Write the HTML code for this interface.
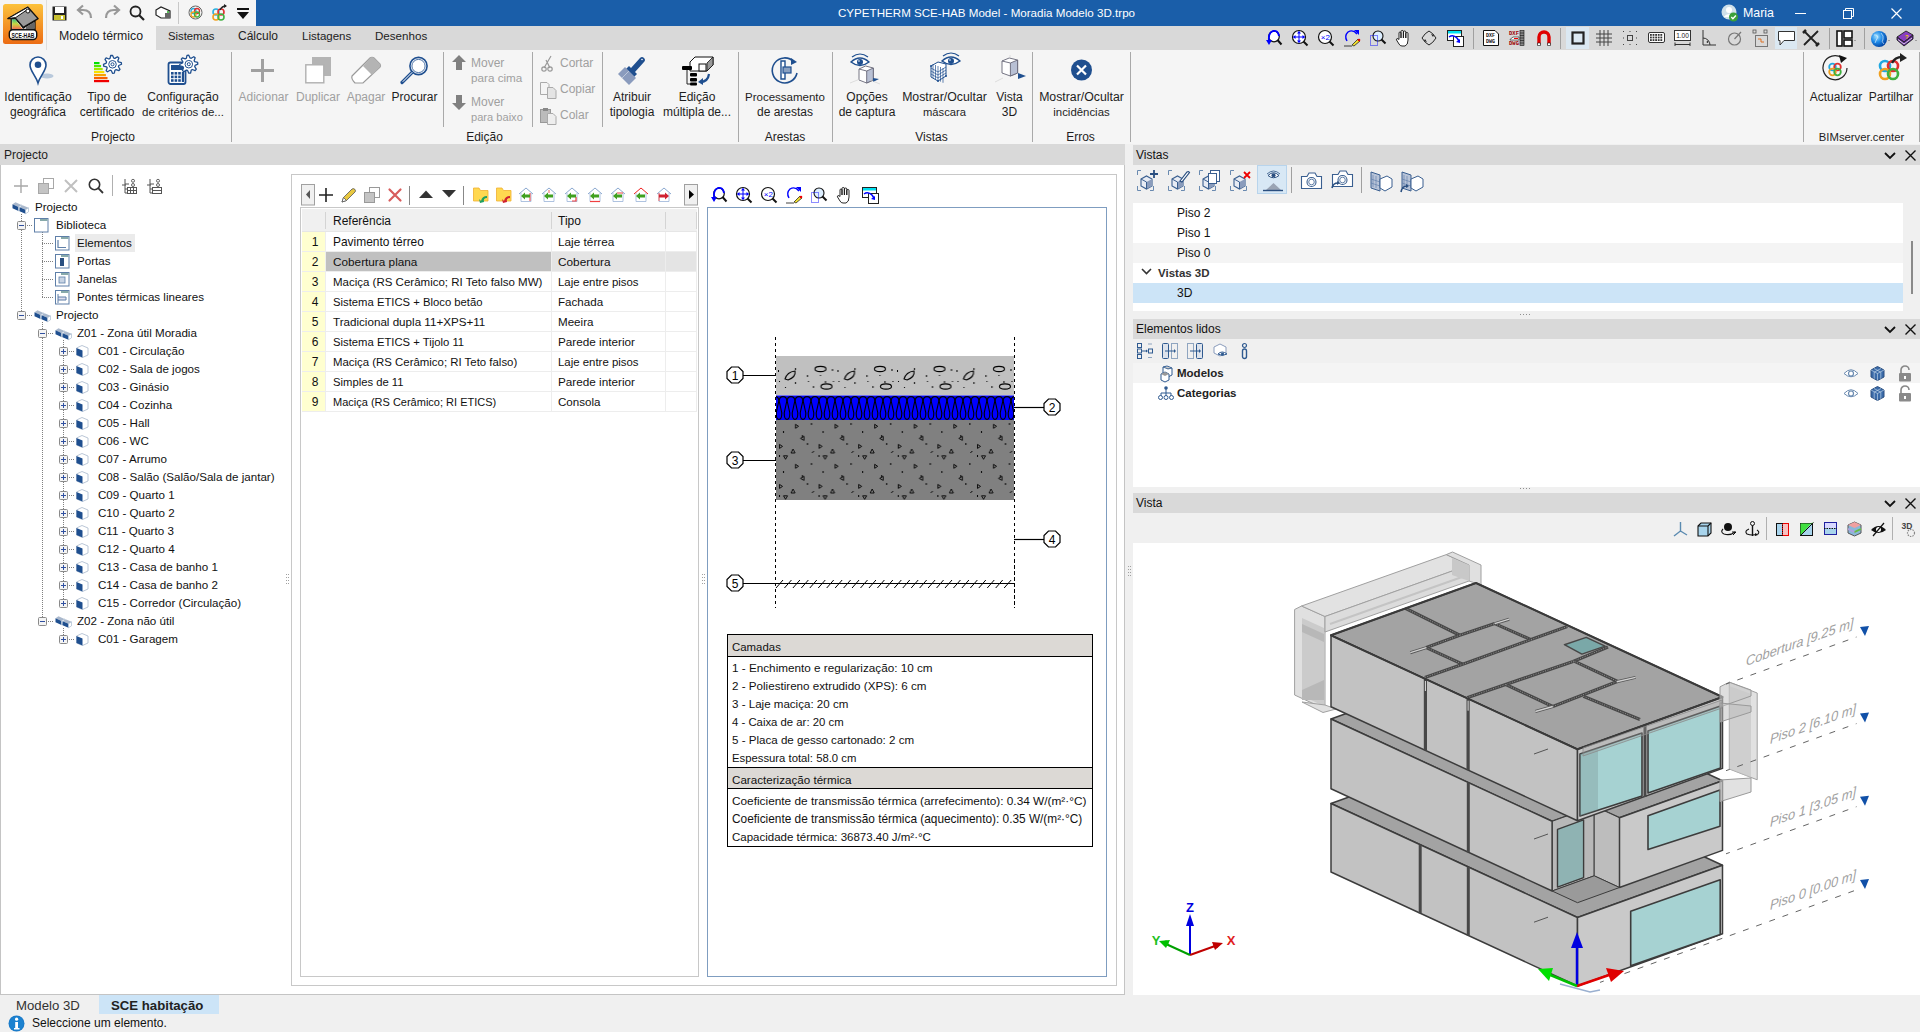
<!DOCTYPE html>
<html><head><meta charset="utf-8">
<style>
*{box-sizing:border-box}
html,body{margin:0;padding:0;width:1920px;height:1032px;overflow:hidden;background:#f0f0f0;font-family:"Liberation Sans",sans-serif;font-size:12px;color:#000}
.a{position:absolute}
.t{position:absolute;white-space:nowrap;line-height:14px}
svg{position:absolute;overflow:visible}
</style></head><body>

<div class="a" style="left:0px;top:0px;width:256px;height:26px;background:#f5f5f5;"></div>
<div class="a" style="left:256px;top:0px;width:1664px;height:26px;background:#1a5ea9;"></div>
<div class="t" style="left:838px;top:6px;font-size:11.6px;color:#fff;">CYPETHERM SCE-HAB Model - Moradia Modelo 3D.trpo</div>
<svg style="left:1721px;top:4px;" width="18" height="18" viewBox="0 0 18 18"><circle cx="8" cy="8" r="7.5" fill="#cfe0ea"/><circle cx="8" cy="6" r="3" fill="#fff"/><path d="M2.5 13 Q8 7 13.5 13" fill="#fff"/><circle cx="12.5" cy="13" r="4.5" fill="#3aa03a"/><path d="M10.3 13 l1.6 1.7 l3-3.2" stroke="#fff" stroke-width="1.4" fill="none"/></svg>
<div class="t" style="left:1743px;top:6px;font-size:12.4px;color:#fff;">Maria</div>
<div class="a" style="left:1795px;top:13px;width:11px;height:1px;background:#fff;"></div>
<svg style="left:1843px;top:8px;" width="11" height="11" viewBox="0 0 11 11"><rect x="0.5" y="2.5" width="8" height="8" fill="none" stroke="#fff"/><path d="M2.5 2.5 V0.5 H10.5 V8.5 H8.5" fill="none" stroke="#fff"/></svg>
<svg style="left:1891px;top:8px;" width="11" height="11" viewBox="0 0 11 11"><path d="M0.5 0.5 L10.5 10.5 M10.5 0.5 L0.5 10.5" stroke="#fff" stroke-width="1.2"/></svg>
<div class="a" style="left:0px;top:26px;width:156px;height:24px;background:#f5f5f5;"></div>
<div class="a" style="left:156px;top:26px;width:1764px;height:24px;background:#d9d9d9;"></div>
<div class="a" style="left:46px;top:0px;width:1px;height:50px;background:#dedede;"></div>
<div class="t" style="left:59px;top:29px;font-size:12.3px;color:#222;">Modelo térmico</div>
<div class="t" style="left:168px;top:29px;font-size:11.3px;color:#222;">Sistemas</div>
<div class="t" style="left:238px;top:29px;color:#222;">Cálculo</div>
<div class="t" style="left:302px;top:29px;font-size:11.5px;color:#222;">Listagens</div>
<div class="t" style="left:375px;top:29px;font-size:11.6px;color:#222;">Desenhos</div>
<svg style="left:3px;top:4px;" width="41" height="41" viewBox="0 0 41 41"><defs><linearGradient id="ag" x1="0" y1="0" x2="0" y2="1"><stop offset="0" stop-color="#fcc23c"/><stop offset="1" stop-color="#ec6c14"/></linearGradient>
<linearGradient id="eg" x1="0" y1="0" x2="0" y2="1"><stop offset="0" stop-color="#30c080"/><stop offset="0.5" stop-color="#c8d840"/><stop offset="1" stop-color="#f07050"/></linearGradient></defs>
<rect x="0" y="0" width="40" height="40" rx="2.5" fill="url(#ag)"/>
<path d="M8.2 13.7 V25.5 H32 V17 L20.3 24 L12.8 14.6Z" fill="#fff" stroke="#111" stroke-width="1.3"/>
<path d="M9.2 15 V25 H19.5 L12.5 15.5Z" fill="url(#eg)"/>
<path d="M23 23 L31 18 V25 H23Z" fill="#666"/>
<path d="M4.9 14.6 L24.9 3.2 L35.1 14.6 L20.3 23.4 L12.8 14.6Z" fill="#9a9a9a" stroke="#111" stroke-width="1.4" stroke-linejoin="round"/>
<path d="M4.9 14.6 L24.9 3.2 L26 4.5 L12.8 13.5Z" fill="#fff" stroke="#111" stroke-width="1"/>
<circle cx="24.9" cy="7" r="2" fill="#fff" stroke="#111" stroke-width="1"/>
<rect x="6.3" y="25.8" width="27.4" height="9.7" rx="3.5" fill="#fff" stroke="#111" stroke-width="1.4"/>
<text x="20" y="33.6" font-family="Liberation Sans" font-size="8" font-weight="bold" text-anchor="middle" fill="#111" textLength="23" lengthAdjust="spacingAndGlyphs">SCE-HAB</text></svg>
<svg style="left:52px;top:6px;" width="15" height="15" viewBox="0 0 15 15"><rect x="0.5" y="0.5" width="14" height="14" fill="#222"/><rect x="3" y="1" width="9" height="6" fill="#fff"/><rect x="2" y="9" width="11" height="5" fill="#c8c030"/><rect x="9" y="10" width="2" height="3" fill="#fff"/></svg>
<svg style="left:77px;top:5px;" width="17" height="15" viewBox="0 0 17 15"><path d="M14 13 Q14 5 6 5 H2" fill="none" stroke="#999" stroke-width="2.2"/><path d="M6 0.5 L1 5 L6 9.5" fill="none" stroke="#999" stroke-width="2.2"/></svg>
<svg style="left:103px;top:5px;" width="17" height="15" viewBox="0 0 17 15"><path d="M3 13 Q3 5 11 5 H15" fill="none" stroke="#999" stroke-width="2.2"/><path d="M11 0.5 L16 5 L11 9.5" fill="none" stroke="#999" stroke-width="2.2"/></svg>
<svg style="left:129px;top:5px;" width="16" height="16" viewBox="0 0 16 16"><circle cx="6.5" cy="6.5" r="5" fill="none" stroke="#222" stroke-width="1.8"/><path d="M10 10 L15 15" stroke="#222" stroke-width="2.2"/></svg>
<svg style="left:155px;top:6px;" width="17" height="14" viewBox="0 0 17 14"><path d="M1 4 L6 1 L15 5 L15 12 L6 12 L1 9 Z" fill="#fff" stroke="#222" stroke-width="1.2"/><rect x="10" y="7" width="5" height="5" fill="#666"/><circle cx="13" cy="6" r="1" fill="#2a2"/></svg>
<div class="a" style="left:178px;top:2px;width:1px;height:22px;background:#c8c8c8;"></div>
<svg style="left:188px;top:5px;" width="15" height="15" viewBox="0 0 15 15"><circle cx="7.5" cy="7.5" r="6.5" fill="none" stroke="#666" stroke-width="1"/><circle cx="5.5" cy="6" r="2.5" fill="none" stroke="#2ab0e0" stroke-width="1.3"/><circle cx="9" cy="6" r="2.5" fill="none" stroke="#e03030" stroke-width="1.3"/><circle cx="5.5" cy="9.5" r="2.5" fill="none" stroke="#f0a020" stroke-width="1.3"/><circle cx="9" cy="9.5" r="2.5" fill="none" stroke="#40b040" stroke-width="1.3"/></svg>
<svg style="left:211px;top:4px;" width="17" height="17" viewBox="0 0 17 17"><circle cx="5" cy="8" r="3" fill="none" stroke="#2ab0e0" stroke-width="1.6"/><circle cx="10" cy="8" r="3" fill="none" stroke="#e03030" stroke-width="1.6"/><circle cx="5" cy="13" r="3" fill="none" stroke="#f0a020" stroke-width="1.6"/><circle cx="10" cy="13" r="3" fill="none" stroke="#40b040" stroke-width="1.6"/><path d="M9 6 Q11 2 15 2" fill="none" stroke="#222" stroke-width="1.4"/><path d="M13 0 L16 2 L13 4Z" fill="#222"/></svg>
<svg style="left:236px;top:6px;" width="14" height="14" viewBox="0 0 14 14"><rect x="1" y="2" width="12" height="2" fill="#111"/><path d="M1 6 L13 6 L7 13 Z" fill="#111"/></svg>
<div class="a" style="left:0px;top:50px;width:1920px;height:94px;background:#f5f5f5;"></div>
<div class="t" style="left:-22.0px;top:90px;width:120px;text-align:center;color:#1e1e1e;">Identificação</div>
<div class="t" style="left:-22.0px;top:105px;width:120px;text-align:center;color:#1e1e1e;">geográfica</div>
<div class="t" style="left:47.0px;top:90px;width:120px;text-align:center;color:#1e1e1e;">Tipo de</div>
<div class="t" style="left:47.0px;top:105px;width:120px;text-align:center;color:#1e1e1e;">certificado</div>
<div class="t" style="left:123.0px;top:90px;width:120px;text-align:center;color:#1e1e1e;">Configuração</div>
<div class="t" style="left:123.0px;top:105px;width:120px;text-align:center;font-size:11.5px;color:#1e1e1e;">de critérios de...</div>
<div class="t" style="left:63.0px;top:130px;width:100px;text-align:center;color:#1e1e1e;">Projecto</div>
<div class="a" style="left:231px;top:52px;width:1px;height:90px;background:#a9a9a9;"></div>
<div class="t" style="left:203.5px;top:90px;width:120px;text-align:center;color:#a0a0a0;">Adicionar</div>
<div class="t" style="left:258.0px;top:90px;width:120px;text-align:center;color:#a0a0a0;">Duplicar</div>
<div class="t" style="left:306.0px;top:90px;width:120px;text-align:center;color:#a0a0a0;">Apagar</div>
<div class="t" style="left:354.5px;top:90px;width:120px;text-align:center;color:#1e1e1e;">Procurar</div>
<div class="a" style="left:443px;top:52px;width:1px;height:75px;background:#a9a9a9;"></div>
<div class="t" style="left:471px;top:56px;color:#a0a0a0;">Mover</div>
<div class="t" style="left:471px;top:71px;font-size:11.7px;color:#a0a0a0;">para cima</div>
<div class="t" style="left:471px;top:95px;color:#a0a0a0;">Mover</div>
<div class="t" style="left:471px;top:110px;font-size:11.1px;color:#a0a0a0;">para baixo</div>
<div class="t" style="left:434.5px;top:130px;width:100px;text-align:center;color:#1e1e1e;">Edição</div>
<div class="a" style="left:532px;top:52px;width:1px;height:75px;background:#a9a9a9;"></div>
<div class="t" style="left:560px;top:56px;color:#a0a0a0;">Cortar</div>
<div class="t" style="left:560px;top:82px;color:#a0a0a0;">Copiar</div>
<div class="t" style="left:560px;top:108px;color:#a0a0a0;">Colar</div>
<div class="a" style="left:602px;top:52px;width:1px;height:75px;background:#a9a9a9;"></div>
<div class="t" style="left:572.0px;top:90px;width:120px;text-align:center;color:#1e1e1e;">Atribuir</div>
<div class="t" style="left:572.0px;top:105px;width:120px;text-align:center;color:#1e1e1e;">tipologia</div>
<div class="t" style="left:637.0px;top:90px;width:120px;text-align:center;color:#1e1e1e;">Edição</div>
<div class="t" style="left:637.0px;top:105px;width:120px;text-align:center;color:#1e1e1e;">múltipla de...</div>
<div class="a" style="left:738px;top:52px;width:1px;height:90px;background:#a9a9a9;"></div>
<div class="t" style="left:725.0px;top:90px;width:120px;text-align:center;font-size:11.5px;color:#1e1e1e;">Processamento</div>
<div class="t" style="left:725.0px;top:105px;width:120px;text-align:center;color:#1e1e1e;">de arestas</div>
<div class="t" style="left:735.0px;top:130px;width:100px;text-align:center;color:#1e1e1e;">Arestas</div>
<div class="a" style="left:832px;top:52px;width:1px;height:90px;background:#a9a9a9;"></div>
<div class="t" style="left:807.0px;top:90px;width:120px;text-align:center;color:#1e1e1e;">Opções</div>
<div class="t" style="left:807.0px;top:105px;width:120px;text-align:center;color:#1e1e1e;">de captura</div>
<div class="t" style="left:884.5px;top:90px;width:120px;text-align:center;font-size:12.3px;color:#1e1e1e;">Mostrar/Ocultar</div>
<div class="t" style="left:884.5px;top:105px;width:120px;text-align:center;font-size:11.2px;color:#1e1e1e;">máscara</div>
<div class="t" style="left:949.5px;top:90px;width:120px;text-align:center;color:#1e1e1e;">Vista</div>
<div class="t" style="left:949.5px;top:105px;width:120px;text-align:center;color:#1e1e1e;">3D</div>
<div class="t" style="left:881.5px;top:130px;width:100px;text-align:center;color:#1e1e1e;">Vistas</div>
<div class="a" style="left:1032px;top:52px;width:1px;height:90px;background:#a9a9a9;"></div>
<div class="t" style="left:1021.5px;top:90px;width:120px;text-align:center;font-size:12.3px;color:#1e1e1e;">Mostrar/Ocultar</div>
<div class="t" style="left:1021.5px;top:105px;width:120px;text-align:center;font-size:11.4px;color:#1e1e1e;">incidências</div>
<div class="t" style="left:1030.5px;top:130px;width:100px;text-align:center;color:#1e1e1e;">Erros</div>
<div class="a" style="left:1130px;top:52px;width:1px;height:90px;background:#a9a9a9;"></div>
<div class="a" style="left:1803px;top:52px;width:1px;height:90px;background:#a9a9a9;"></div>
<div class="t" style="left:1776.0px;top:90px;width:120px;text-align:center;color:#1e1e1e;">Actualizar</div>
<div class="t" style="left:1831.0px;top:90px;width:120px;text-align:center;color:#1e1e1e;">Partilhar</div>
<div class="t" style="left:1801.5px;top:130px;width:120px;text-align:center;font-size:11.3px;color:#1e1e1e;">BIMserver.center</div>
<div class="a" style="left:1919px;top:52px;width:1px;height:90px;background:#a9a9a9;"></div>
<svg style="left:29px;top:56px;" width="20" height="29" viewBox="0 0 20 29"><ellipse cx="18" cy="20" rx="6.5" ry="2.6" fill="#b9c9dc"/><path d="M9 27 C7 20 1 15 1 9 A8 8 0 0 1 17 9 C17 15 11 20 9 27 Z" fill="#fff" stroke="#1f4f8f" stroke-width="1.6"/><circle cx="9" cy="8.7" r="3.3" fill="#1f4f8f"/></svg>
<svg style="left:94px;top:62px;" width="16" height="21" viewBox="0 0 16 21"><rect x="0" y="0" width="5.5" height="2.2" fill="#00e000"/><rect x="0" y="3" width="7.1" height="2.2" fill="#50e800"/><rect x="0" y="6" width="8.7" height="2.2" fill="#a0e800"/><rect x="0" y="9" width="10.3" height="2.2" fill="#f8e000"/><rect x="0" y="12" width="11.9" height="2.2" fill="#f8a000"/><rect x="0" y="15" width="13.5" height="2.2" fill="#f86000"/><rect x="0" y="18" width="15.100000000000001" height="2.2" fill="#f00000"/></svg>
<svg style="left:100px;top:52px;" width="25" height="25" viewBox="0 0 25 25"><polygon points="21.32,10.51 21.50,12.27 18.78,13.53 18.42,14.73 20.00,17.27 18.89,18.64 16.08,17.61 14.97,18.20 14.29,21.12 12.53,21.30 11.27,18.58 10.07,18.22 7.53,19.80 6.16,18.69 7.19,15.88 6.60,14.77 3.68,14.09 3.50,12.33 6.22,11.07 6.58,9.87 5.00,7.33 6.11,5.96 8.92,6.99 10.03,6.40 10.71,3.48 12.47,3.30 13.73,6.02 14.93,6.38 17.47,4.80 18.84,5.91 17.81,8.72 18.40,9.83" fill="#fff" stroke="#1f4f8f" stroke-width="1.3" stroke-linejoin="round"/><circle cx="12.5" cy="12.3" r="3.78" fill="none" stroke="#1f4f8f" stroke-width="1"/><circle cx="12.5" cy="12.3" r="1.53" fill="none" stroke="#1f4f8f" stroke-width="1"/></svg>
<svg style="left:166px;top:52px;" width="34" height="34" viewBox="0 0 34 34"><rect x="2.5" y="10.5" width="17" height="21.5" rx="2" fill="#fff" stroke="#1f4f8f" stroke-width="1.8"/><rect x="5" y="13" width="12" height="5" fill="#1f4f8f"/><rect x="5.0" y="20.0" width="2.6" height="2.6" fill="#1f4f8f"/><rect x="5.0" y="23.6" width="2.6" height="2.6" fill="#1f4f8f"/><rect x="5.0" y="27.2" width="2.6" height="2.6" fill="#1f4f8f"/><rect x="8.6" y="20.0" width="2.6" height="2.6" fill="#1f4f8f"/><rect x="8.6" y="23.6" width="2.6" height="2.6" fill="#1f4f8f"/><rect x="8.6" y="27.2" width="2.6" height="2.6" fill="#1f4f8f"/><rect x="12.2" y="20.0" width="2.6" height="2.6" fill="#1f4f8f"/><rect x="12.2" y="23.6" width="2.6" height="2.6" fill="#1f4f8f"/><rect x="12.2" y="27.2" width="2.6" height="2.6" fill="#1f4f8f"/><rect x="15.8" y="20" width="2.2" height="10" fill="#1f4f8f"/><polygon points="31.62,10.41 31.80,12.17 29.08,13.43 28.72,14.63 30.30,17.17 29.19,18.54 26.38,17.51 25.27,18.10 24.59,21.02 22.83,21.20 21.57,18.48 20.37,18.12 17.83,19.70 16.46,18.59 17.49,15.78 16.90,14.67 13.98,13.99 13.80,12.23 16.52,10.97 16.88,9.77 15.30,7.23 16.41,5.86 19.22,6.89 20.33,6.30 21.01,3.38 22.77,3.20 24.03,5.92 25.23,6.28 27.77,4.70 29.14,5.81 28.11,8.62 28.70,9.73" fill="#fff" stroke="#1f4f8f" stroke-width="1.3" stroke-linejoin="round"/><circle cx="22.8" cy="12.2" r="3.78" fill="none" stroke="#1f4f8f" stroke-width="1"/><circle cx="22.8" cy="12.2" r="1.53" fill="none" stroke="#1f4f8f" stroke-width="1"/></svg>
<svg style="left:251px;top:59px;" width="24" height="24" viewBox="0 0 24 24"><rect x="10" y="0" width="3" height="23" fill="#a0a0a0"/><rect x="0" y="10" width="23" height="3" fill="#a0a0a0"/></svg>
<svg style="left:305px;top:57px;" width="27" height="27" viewBox="0 0 27 27"><rect x="7" y="0" width="19" height="19" fill="#b4b4b4"/><rect x="0.8" y="7.8" width="18" height="18" fill="#fff" stroke="#b0b0b0" stroke-width="1.4"/></svg>
<svg style="left:351px;top:57px;" width="31" height="27" viewBox="0 0 31 27"><path d="M1 19 L19 1 Q21 -0.5 23 1 L29 7 Q30 9 29 10 L12 26 L4 26 Q0 22 1 19 Z" fill="#fff" stroke="#999" stroke-width="1.2"/><path d="M12 9 L19 1 Q21 -0.5 23 1 L29 7 Q30 9 29 10 L21 18 Z" fill="#b4b4b4"/></svg>
<svg style="left:400px;top:56px;" width="29" height="29" viewBox="0 0 29 29"><circle cx="18.5" cy="10" r="8.6" fill="#fff" stroke="#1f4f8f" stroke-width="1.6"/><circle cx="18.5" cy="10" r="6.6" fill="none" stroke="#1f4f8f" stroke-width="0.8"/><path d="M12 16.5 L2 26.5" stroke="#1f4f8f" stroke-width="3.2" stroke-linecap="round"/><path d="M12 16.5 L3 25.5" stroke="#fff" stroke-width="1" stroke-linecap="round"/></svg>
<svg style="left:452px;top:55px;" width="14" height="16" viewBox="0 0 14 16"><path d="M7 0 L14 7 L10 7 L10 15 L4 15 L4 7 L0 7 Z" fill="#808080"/></svg>
<svg style="left:452px;top:95px;" width="14" height="16" viewBox="0 0 14 16"><path d="M7 15 L14 8 L10 8 L10 0 L4 0 L4 8 L0 8 Z" fill="#808080"/></svg>
<svg style="left:541px;top:56px;" width="12" height="16" viewBox="0 0 12 16"><path d="M3 12 L10 0 M9 12 L5 4" stroke="#999" stroke-width="1.2" fill="none"/><circle cx="3" cy="13" r="2.2" fill="none" stroke="#999" stroke-width="1.2"/><circle cx="9" cy="13" r="2.2" fill="none" stroke="#999" stroke-width="1.2"/></svg>
<svg style="left:540px;top:82px;" width="17" height="17" viewBox="0 0 17 17"><path d="M0.5 0.5 H7 L9 2.5 V12.5 H0.5 Z" fill="#f4f4f4" stroke="#aaa"/><path d="M7.5 5.5 H13 L16 8.5 V16.5 H7.5 Z" fill="#e4e4e4" stroke="#aaa"/></svg>
<svg style="left:540px;top:108px;" width="17" height="17" viewBox="0 0 17 17"><rect x="0.5" y="1.5" width="10" height="13" fill="#bbb" stroke="#999"/><rect x="3" y="0" width="5" height="3" fill="#888"/><path d="M7.5 5.5 H13 L16 8.5 V16.5 H7.5 Z" fill="#eee" stroke="#aaa"/></svg>
<svg style="left:617px;top:55px;" width="30" height="30" viewBox="0 0 30 30"><path d="M27 3 Q25 1 23 3 L14 13 L12 11 L8 15 L16 23 L20 19 L18 17 L27 7 Q29 5 27 3Z" fill="#1f4f8f"/><path d="M1 19 L8 12 L19 23 L12 30 Z" fill="#8a9bbd"/><path d="M5 23 L12 16" stroke="#c8d0e0" stroke-width="0.8"/><circle cx="25" cy="4.5" r="0.8" fill="#fff"/></svg>
<svg style="left:682px;top:55px;" width="31" height="30" viewBox="0 0 31 30"><path d="M8 7 L13 2 L31 2 L31 10 L25 16 L8 16Z" fill="#fff" stroke="#111" stroke-width="1"/><path d="M25 16 L31 10 L31 2 L25 8Z" fill="#999" stroke="#111" stroke-width="0.8"/><rect x="17" y="9" width="7" height="7" fill="#fff" stroke="#111"/><rect x="0" y="11" width="10" height="4" rx="1" fill="#000"/><path d="M5 15 V29 H8" stroke="#222" fill="none"/><rect x="8" y="18" width="7" height="3.5" rx="1" fill="#000"/><rect x="8" y="23" width="7" height="3.5" rx="1" fill="#000"/><rect x="8" y="27.5" width="7" height="3" rx="1" fill="#000"/><path d="M27 19 Q26 27 18 27" fill="none" stroke="#1f4f8f" stroke-width="2.2"/><path d="M21 23 L16 27 L21 30Z" fill="#1f4f8f"/></svg>
<svg style="left:771px;top:56px;" width="29" height="29" viewBox="0 0 29 29"><path d="M23 6 A12.5 12.5 0 1 0 26 17" fill="none" stroke="#1f4f8f" stroke-width="1.6"/><path d="M20 2 L26 6 L20 9Z" fill="#1f4f8f"/><path d="M10 5 H14 V23 H10 Z" fill="#fff" stroke="#1f4f8f" stroke-width="1.4"/><rect x="12" y="11" width="8" height="6" fill="#8aa0c0" stroke="#1f4f8f" stroke-width="1.2"/></svg>
<svg style="left:850px;top:54px;" width="34" height="31" viewBox="0 0 34 31"><path d="M1 8 Q10 0 19 8 Q10 15 1 8Z" fill="#fff" stroke="#1f4f8f" stroke-width="1.4"/><circle cx="10" cy="8" r="3" fill="#1f4f8f"/><circle cx="9" cy="7" r="0.8" fill="#fff"/><path d="M2 3 Q10 -3 18 3" fill="none" stroke="#1f4f8f" stroke-width="1.2"/><path d="M9 15 L15.6 12 L23.3 14 L23.3 26 L16.7 29 L9 26Z" fill="#fff" stroke="#667" stroke-width="0.9"/><path d="M16.7 17 L23.3 14 L23.3 26 L16.7 29Z" fill="#b8c0d4" stroke="#667" stroke-width="0.9"/><path d="M9 15 L16.7 17" stroke="#667" stroke-width="0.9"/><path d="M23 24 L29 25 L23 28Z" fill="#1f4f8f"/><path d="M0 29 L10 25 M20 26 L30 30" stroke="#ccc" stroke-width="0.6"/></svg>
<svg style="left:930px;top:54px;" width="32" height="31" viewBox="0 0 32 31"><path d="M12 7 Q21 -1 30 7 Q21 14 12 7Z" fill="#fff" stroke="#1f4f8f" stroke-width="1.4"/><circle cx="21" cy="7" r="3" fill="#1f4f8f"/><circle cx="20" cy="6" r="0.8" fill="#fff"/><path d="M13 2 Q21 -4 29 2" fill="none" stroke="#1f4f8f" stroke-width="1.2"/><path d="M1 12 L8 8 L16 10 L16 22 L8 27 L1 23Z" fill="#fff" stroke="#1f4f8f" stroke-width="1"/><path d="M1 14 L8 18 L16 13" fill="none" stroke="#1f4f8f" stroke-width="0.7"/><path d="M1 17 L8 21 L16 16" fill="none" stroke="#1f4f8f" stroke-width="0.7"/><path d="M1 20 L8 24 L16 19" fill="none" stroke="#1f4f8f" stroke-width="0.7"/><path d="M3.0 10 V24.0" stroke="#1f4f8f" stroke-width="0.7"/><path d="M5.5 11 V25.2" stroke="#1f4f8f" stroke-width="0.7"/><path d="M8.0 12 V26.4" stroke="#1f4f8f" stroke-width="0.7"/><path d="M10.5 13 V27.6" stroke="#1f4f8f" stroke-width="0.7"/><path d="M13.0 14 V28.8" stroke="#1f4f8f" stroke-width="0.7"/><circle cx="1" cy="12" r="1" fill="#1f4f8f"/><circle cx="8" cy="27" r="1" fill="#1f4f8f"/><circle cx="16" cy="22" r="1" fill="#1f4f8f"/></svg>
<svg style="left:995px;top:55px;" width="32" height="29" viewBox="0 0 32 29"><path d="M7 6 L14.2 3 L22.6 5 L22.6 18 L15.399999999999999 21 L7 18Z" fill="#fff" stroke="#667" stroke-width="0.9"/><path d="M15.399999999999999 8 L22.6 5 L22.6 18 L15.399999999999999 21Z" fill="#b8c0d4" stroke="#667" stroke-width="0.9"/><path d="M7 6 L15.399999999999999 8" stroke="#667" stroke-width="0.9"/><path d="M23 18 L31 21 L23 24Z" fill="#1f4f8f"/><path d="M0 27 L8 23 M15 0 V3" stroke="#ccc" stroke-width="0.6"/></svg>
<svg style="left:1070px;top:59px;" width="25" height="22" viewBox="0 0 25 22"><circle cx="11.5" cy="11" r="10.5" fill="#1f4f8f"/><path d="M7 6.5 L16 15.5 M16 6.5 L7 15.5" stroke="#fff" stroke-width="2.2"/></svg>
<svg style="left:1822px;top:55px;" width="28" height="29" viewBox="0 0 28 29"><path d="M25 13 A12 12 0 1 1 20 3" fill="none" stroke="#222" stroke-width="1.2"/><path d="M17 0 L25 3 L19 8Z" fill="#111"/><circle cx="10.5" cy="12" r="3.3" fill="none" stroke="#20a8e0" stroke-width="1.8"/><circle cx="15.5" cy="12" r="3.3" fill="none" stroke="#e03030" stroke-width="1.8"/><circle cx="10.5" cy="17" r="3.3" fill="none" stroke="#f0a020" stroke-width="1.8"/><circle cx="15.5" cy="17" r="3.3" fill="none" stroke="#40b040" stroke-width="1.8"/></svg>
<svg style="left:1877px;top:54px;" width="30" height="30" viewBox="0 0 30 30"><circle cx="8" cy="12" r="5" fill="none" stroke="#20a8e0" stroke-width="2.6"/><circle cx="16" cy="12" r="5" fill="none" stroke="#e03030" stroke-width="2.6"/><circle cx="8" cy="20" r="5" fill="none" stroke="#f0a020" stroke-width="2.6"/><circle cx="16" cy="20" r="5" fill="none" stroke="#40b040" stroke-width="2.6"/><path d="M15 9 Q18 3 25 3" fill="none" stroke="#222" stroke-width="2.4"/><path d="M23 -1 L30 4 L23 8Z" fill="#222"/></svg>
<div class="a" style="left:1262px;top:27px;width:1px;height:1px;background:#d9d9d9;"></div>
<svg style="left:1266.0px;top:30px;" width="17" height="17" viewBox="0 0 17 17"><circle cx="8" cy="6.5" r="5.3" fill="#fff" stroke="#111" stroke-width="1.2"/><path d="M11.5 10 L15.5 14.5" stroke="#111" stroke-width="2"/><path d="M13 6 Q12 0 7 1 Q2 3 3 11" fill="none" stroke="#0000ff" stroke-width="1.8"/><path d="M0 10 L6 10 L3 15Z" fill="#0000ff"/></svg>
<svg style="left:1291.9px;top:30px;" width="17" height="17" viewBox="0 0 17 17"><circle cx="7" cy="7" r="6.5" fill="#fff" stroke="#111" stroke-width="1.2"/><path d="M11.5 11.5 L15.5 15.5" stroke="#111" stroke-width="2"/><path d="M7 1.5 V12.5 M1.5 7 H12.5" stroke="#0000ff" stroke-width="1"/><path d="M7 1 L5 3.5 H9Z M7 13 L5 10.5 H9Z M1 7 L3.5 5 V9Z M13 7 L10.5 5 V9Z" fill="#0000ff"/></svg>
<svg style="left:1317.8px;top:30px;" width="17" height="17" viewBox="0 0 17 17"><circle cx="7" cy="7" r="6.5" fill="#fff" stroke="#111" stroke-width="1.2"/><path d="M11.5 11.5 L15.5 15.5" stroke="#111" stroke-width="2"/><text x="7.3" y="10" font-family="Liberation Sans" font-size="8" text-anchor="middle" fill="#0000ff">×2</text></svg>
<svg style="left:1343.7px;top:30px;" width="17" height="17" viewBox="0 0 17 17"><path d="M13 4 Q9 -1 4 2 Q0 6 3 11" fill="none" stroke="#0000ff" stroke-width="1.4"/><path d="M10 0 L15 0 L15 5Z" fill="#0000ff"/><path d="M8 15 L14 9 L16 11 L10 16Z" fill="#f0e030" stroke="#111" stroke-width="0.7"/><circle cx="15" cy="10" r="1.3" fill="#e00"/><path d="M0 16 H8" stroke="#111" stroke-width="0.8"/></svg>
<svg style="left:1369.6px;top:30px;" width="17" height="17" viewBox="0 0 17 17"><circle cx="8" cy="6" r="5" fill="#def" stroke="#111" stroke-width="1.1"/><path d="M11.5 9.5 L15.5 13.5" stroke="#111" stroke-width="2"/><rect x="0.5" y="5.5" width="7" height="10" fill="none" stroke="#0000ff" stroke-width="0.9" stroke-dasharray="1 1"/></svg>
<svg style="left:1395.5px;top:30px;" width="15" height="17" viewBox="0 0 15 17"><path d="M3 9 V3 Q3 2 4 2 Q5 2 5 3 V8 V1.5 Q5 0.5 6.2 0.5 Q7.4 0.5 7.4 1.5 V8 V2 Q7.4 1 8.6 1 Q9.8 1 9.8 2 V8 V3.5 Q9.8 2.5 11 2.5 Q12 2.5 12 3.5 V10 Q12 15 9 16 H6 Q4 16 3 14 L0.5 10 Q0 9 1 8.6 Q2 8.4 3 9.5Z" fill="#fff" stroke="#111" stroke-width="0.9"/></svg>
<svg style="left:1421.4px;top:30px;" width="17" height="17" viewBox="0 0 17 17"><path d="M8 1 Q12 3 15 8 Q12 13 8 15 Q4 13 1 8 Q4 3 8 1Z" fill="none" stroke="#222" stroke-width="1"/><path d="M10 4 L13 5 L12 7Z M6 12 L3 11 L4 9Z" fill="#222"/></svg>
<svg style="left:1447.3px;top:30px;" width="17" height="17" viewBox="0 0 17 17"><rect x="0.5" y="0.5" width="14" height="10" fill="#fff" stroke="#222"/><rect x="1" y="1" width="13" height="2.5" fill="#00e0f0"/><rect x="6.5" y="6.5" width="10" height="10" fill="#fff" stroke="#222"/><path d="M2 7 Q6 4 10 8 L12 11" fill="none" stroke="#0000ff" stroke-width="1.5"/><path d="M9 12 L13 13 L13 9Z" fill="#0000ff"/></svg>
<div class="a" style="left:1473px;top:28px;width:1px;height:21px;background:#a0a0a0;"></div>
<svg style="left:1483px;top:30px;" width="16" height="16" viewBox="0 0 16 16"><path d="M0.5 0.5 H12 L15.5 4 V15.5 H0.5Z" fill="#fff" stroke="#111"/><text x="7.5" y="7" font-family="Liberation Mono" font-size="5" font-weight="bold" text-anchor="middle" fill="#111">DXF</text><text x="7.5" y="13" font-family="Liberation Mono" font-size="5" font-weight="bold" text-anchor="middle" fill="#111">DWG</text></svg>
<svg style="left:1509px;top:30px;" width="16" height="16" viewBox="0 0 16 16"><text x="5" y="5" font-family="Liberation Mono" font-size="5.5" font-weight="bold" text-anchor="middle" fill="#900">DXF</text><text x="5" y="15" font-family="Liberation Mono" font-size="5.5" font-weight="bold" text-anchor="middle" fill="#900">DWG</text><path d="M1 9.5 L4 7 H10 V10 H1Z" fill="#fff" stroke="#111" stroke-width="0.6"/><path d="M5 8.5 H9" stroke="#e00" stroke-width="1"/><rect x="11" y="0.5" width="4" height="15" fill="#888" stroke="#111" stroke-width="0.6"/><path d="M11 3 H15 M11 5.5 H15 M11 8 H15 M11 10.5 H15 M11 13 H15" stroke="#111" stroke-width="0.6"/></svg>
<svg style="left:1537px;top:30px;" width="14" height="16" viewBox="0 0 14 16"><path d="M2 15 V7 A5 5 0 0 1 12 7 V15" fill="none" stroke="#e00000" stroke-width="3.4"/><path d="M0.5 13 H3.5 V15.5 H0.5Z M10.5 13 H13.5 V15.5 H10.5Z" fill="#fff" stroke="#111" stroke-width="0.6"/></svg>
<div class="a" style="left:1560px;top:28px;width:1px;height:21px;background:#a0a0a0;"></div>
<div class="a" style="left:1566px;top:27px;width:23px;height:22px;background:#dbe8f2;"></div>
<svg style="left:1571px;top:31px;" width="14" height="14" viewBox="0 0 14 14"><rect x="1.5" y="1.5" width="11" height="11" fill="none" stroke="#222" stroke-width="2.2"/></svg>
<svg style="left:1596px;top:30px;" width="17" height="17" viewBox="0 0 17 17"><path d="M0 4 H16 M0 8 H16 M0 12 H16 M4 0 V16 M8 0 V16 M12 0 V16" stroke="#444" stroke-width="1"/></svg>
<svg style="left:1623px;top:31px;" width="14" height="14" viewBox="0 0 14 14"><rect x="4.5" y="4.5" width="5" height="5" fill="none" stroke="#444"/><path d="M0 0h1v1h-1z M13 0h1v1h-1z M0 13h1v1h-1z M13 13h1v1h-1z M6.5 0h1v1h-1z M0 6.5h1v1h-1z M13 6.5h1v1h-1z M6.5 13h1v1h-1z" fill="#444"/></svg>
<svg style="left:1648px;top:32px;" width="17" height="11" viewBox="0 0 17 11"><rect x="0.5" y="0.5" width="16" height="10" rx="1.5" fill="#fff" stroke="#333"/><rect x="2.0" y="2.0" width="1.8" height="1.8" fill="#333"/><rect x="2.0" y="4.6" width="1.8" height="1.8" fill="#333"/><rect x="2.0" y="7.2" width="1.8" height="1.8" fill="#333"/><rect x="4.6" y="2.0" width="1.8" height="1.8" fill="#333"/><rect x="4.6" y="4.6" width="1.8" height="1.8" fill="#333"/><rect x="4.6" y="7.2" width="1.8" height="1.8" fill="#333"/><rect x="7.2" y="2.0" width="1.8" height="1.8" fill="#333"/><rect x="7.2" y="4.6" width="1.8" height="1.8" fill="#333"/><rect x="7.2" y="7.2" width="1.8" height="1.8" fill="#333"/><rect x="9.8" y="2.0" width="1.8" height="1.8" fill="#333"/><rect x="9.8" y="4.6" width="1.8" height="1.8" fill="#333"/><rect x="9.8" y="7.2" width="1.8" height="1.8" fill="#333"/><rect x="12.4" y="2.0" width="1.8" height="1.8" fill="#333"/><rect x="12.4" y="4.6" width="1.8" height="1.8" fill="#333"/><rect x="12.4" y="7.2" width="1.8" height="1.8" fill="#333"/></svg>
<svg style="left:1674px;top:30px;" width="17" height="17" viewBox="0 0 17 17"><rect x="0.5" y="0.5" width="16" height="10" fill="#fff" stroke="#333"/><text x="8.5" y="8" font-family="Liberation Sans" font-size="6.5" text-anchor="middle" fill="#222">1.00</text><path d="M1 14.5 H16 M1 12.5 V16 M16 12.5 V16" stroke="#333"/></svg>
<svg style="left:1701px;top:30px;" width="15" height="17" viewBox="0 0 15 17"><path d="M2 0 V15 H15" fill="none" stroke="#333"/><path d="M2 8 A7 7 0 0 1 9 15" fill="none" stroke="#333"/><circle cx="6.5" cy="12" r="0.9" fill="#333"/></svg>
<svg style="left:1727px;top:30px;" width="17" height="17" viewBox="0 0 17 17"><circle cx="7.5" cy="9" r="6" fill="none" stroke="#777" stroke-width="1.2"/><path d="M7.5 9 L14 2" stroke="#777" stroke-width="1.2"/></svg>
<svg style="left:1753px;top:30px;" width="15" height="17" viewBox="0 0 15 17"><rect x="2.5" y="5.5" width="12" height="11" fill="none" stroke="#111" stroke-dasharray="1 1"/><rect x="0" y="0" width="3" height="3" fill="none" stroke="#555" stroke-width="0.8"/><rect x="11" y="0" width="3" height="3" fill="none" stroke="#555" stroke-width="0.8"/><path d="M5 9 H8 V12 H11" fill="none" stroke="#e07020" stroke-width="1"/></svg>
<div class="a" style="left:1775px;top:27px;width:22px;height:22px;background:#dbe8f2;"></div>
<svg style="left:1778px;top:31px;" width="17" height="15" viewBox="0 0 17 15"><path d="M0.5 0.5 H16.5 V9.5 H6 L2 14 V9.5 H0.5Z" fill="#fff" stroke="#333"/></svg>
<svg style="left:1803px;top:30px;" width="17" height="17" viewBox="0 0 17 17"><path d="M1 15 L15 1 M1 1 L15 15" stroke="#222" stroke-width="1.8"/><path d="M0 3 L3 0 M13 16 L16 13" stroke="#222" stroke-width="2.5"/></svg>
<div class="a" style="left:1829px;top:28px;width:1px;height:21px;background:#a0a0a0;"></div>
<svg style="left:1836px;top:30px;" width="20" height="17" viewBox="0 0 20 17"><rect x="1" y="1" width="5" height="15" fill="#fff" stroke="#111" stroke-width="1.6"/><rect x="8" y="1" width="8" height="7" fill="#fff" stroke="#111" stroke-width="1.6"/><rect x="8" y="10" width="8" height="6" fill="#fff" stroke="#111" stroke-width="1.6"/><path d="M18 10 h2 l-1 1z" fill="#666"/></svg>
<div class="a" style="left:1864px;top:28px;width:1px;height:21px;background:#a0a0a0;"></div>
<svg style="left:1871px;top:30px;" width="18" height="17" viewBox="0 0 18 17"><defs><radialGradient id="gl" cx="0.35" cy="0.35" r="0.7"><stop offset="0" stop-color="#9fe0ff"/><stop offset="0.5" stop-color="#1f8ae8"/><stop offset="1" stop-color="#0040a0"/></radialGradient></defs><circle cx="8" cy="9" r="8" fill="url(#gl)"/><path d="M3 5 Q6 4 7 7 Q5 10 4 13 M10 3 Q13 6 12 9 Q10 12 13 14" stroke="#fff" stroke-width="0.8" fill="none" opacity="0.7"/><path d="M17 10 h2 l-1 1z" fill="#666"/></svg>
<svg style="left:1896px;top:30px;" width="22" height="17" viewBox="0 0 22 17"><path d="M1 7 L10 1 L17 5 L8 12Z" fill="#8a40c0" stroke="#222" stroke-width="0.9"/><path d="M1 7 L1 10 L8 16 L17 9 L17 5 L8 12Z" fill="#5a2090" stroke="#222" stroke-width="0.9"/><path d="M2 9.5 L8 14 L16 8" stroke="#fff" stroke-width="0.8" fill="none"/><text x="9" y="8.5" font-family="Liberation Sans" font-size="6" font-weight="bold" fill="#f0d000">?</text><path d="M19 10 h2 l-1 1z" fill="#666"/></svg>
<div class="a" style="left:0px;top:144px;width:1125px;height:21px;background:#d9d9d9;"></div>
<div class="t" style="left:4px;top:148px;color:#1e1e1e;">Projecto</div>
<div class="a" style="left:0;top:165px;width:1125px;height:830px;background:#fff;border:1px solid #c4c4c4;border-top:none"></div>
<svg style="left:14px;top:179px;" width="14" height="14" viewBox="0 0 14 14"><path d="M7 0 V14 M0 7 H14" stroke="#a8a8a8" stroke-width="1.4"/></svg>
<svg style="left:38px;top:178px;" width="16" height="16" viewBox="0 0 16 16"><rect x="5.5" y="0.5" width="10" height="10" fill="#fff" stroke="#a8a8a8"/><rect x="0.5" y="5.5" width="10" height="10" fill="#c4c4c4" stroke="#a8a8a8"/></svg>
<svg style="left:64px;top:179px;" width="14" height="14" viewBox="0 0 14 14"><path d="M1 1 L13 13 M13 1 L1 13" stroke="#c0c0c0" stroke-width="2"/></svg>
<svg style="left:88px;top:178px;" width="16" height="16" viewBox="0 0 16 16"><circle cx="6.5" cy="6.5" r="5.2" fill="none" stroke="#333" stroke-width="1.6"/><path d="M10.2 10.2 L15 15" stroke="#333" stroke-width="1.8"/></svg>
<div class="a" style="left:112px;top:175px;width:1px;height:21px;background:#b0b0b0;"></div>
<svg style="left:122px;top:179px;" width="15" height="15" viewBox="0 0 15 15"><path d="M0 6 H4 M3 0 V14 H6 M3 5 H7 M3 10 H6" stroke="#555" stroke-width="1" fill="none"/><circle cx="11" cy="1.8" r="1.5" fill="#fff" stroke="#555" stroke-width="0.9"/><circle cx="11" cy="6" r="1.5" fill="#fff" stroke="#555" stroke-width="0.9"/><rect x="5.5" y="8.5" width="9" height="6" fill="#fff" stroke="#555"/><path d="M8.5 8.5 V14.5 M11.5 8.5 V14.5 M5.5 11.5 H14.5" stroke="#555"/></svg>
<svg style="left:147px;top:179px;" width="15" height="15" viewBox="0 0 15 15"><path d="M0 6 H4 M3 0 V14 H6 M3 5 H7 M3 10 H6" stroke="#555" stroke-width="1" fill="none"/><circle cx="11" cy="1.8" r="1.5" fill="#fff" stroke="#555" stroke-width="0.9"/><circle cx="11" cy="6" r="1.5" fill="#fff" stroke="#555" stroke-width="0.9"/><rect x="5.5" y="8.5" width="9" height="6" fill="#fff" stroke="#555"/><path d="M5.5 11.5 H14.5" stroke="#555"/></svg>
<div class="a" style="left:21px;top:214px;width:1px;height:102px;background:transparent;background-image:linear-gradient(#808080 50%,transparent 50%);background-size:1px 2px"></div>
<div class="a" style="left:42px;top:232px;width:1px;height:66px;background:transparent;background-image:linear-gradient(#808080 50%,transparent 50%);background-size:1px 2px"></div>
<div class="a" style="left:42px;top:322px;width:1px;height:300px;background:transparent;background-image:linear-gradient(#808080 50%,transparent 50%);background-size:1px 2px"></div>
<div class="a" style="left:63px;top:340px;width:1px;height:264px;background:transparent;background-image:linear-gradient(#808080 50%,transparent 50%);background-size:1px 2px"></div>
<div class="a" style="left:63px;top:628px;width:1px;height:12px;background:transparent;background-image:linear-gradient(#808080 50%,transparent 50%);background-size:1px 2px"></div>
<div class="a" style="left:75px;top:234px;width:60px;height:18px;background:#ebebeb;"></div>
<div class="t" style="left:35px;top:200px;font-size:11.6px;color:#111;">Projecto</div>
<svg style="left:12px;top:202px;" width="17" height="13" viewBox="0 0 17 13"><path d="M0.5 2.3 L3.5 0.3 L9.5 2.9 L6.5 4.8999999999999995Z" fill="#aab8cc"/><path d="M0.5 2.3 L6.5 4.8999999999999995 L6.5 8.9 L0.5 6.3Z" fill="#1f4f8f"/><path d="M6.5 4.8999999999999995 L9.5 2.9 L9.5 6.8999999999999995 L6.5 8.9Z" fill="#fff" stroke="#9ab0c8" stroke-width="0.6"/><path d="M7.5 5.2 L10.5 3.2 L16.5 5.800000000000001 L13.5 7.8Z" fill="#aab8cc"/><path d="M7.5 5.2 L13.5 7.8 L13.5 11.8 L7.5 9.2Z" fill="#1f4f8f"/><path d="M13.5 7.8 L16.5 5.800000000000001 L16.5 9.8 L13.5 11.8Z" fill="#fff" stroke="#9ab0c8" stroke-width="0.6"/></svg>
<div class="t" style="left:56px;top:218px;font-size:11.6px;color:#111;">Biblioteca</div>
<svg style="left:17px;top:221px;" width="9" height="9" viewBox="0 0 9 9"><rect x="0.5" y="0.5" width="8" height="8" rx="1" fill="#f4f4f4" stroke="#8a8a8a"/><path d="M2 4.5 H7" stroke="#3050a0" stroke-width="1"/></svg>
<div class="a" style="left:27px;top:225px;width:5px;height:1px;background:transparent;background-image:linear-gradient(90deg,#808080 50%,transparent 50%);background-size:2px 1px"></div>
<svg style="left:34px;top:218px;" width="15" height="15" viewBox="0 0 15 15"><rect x="0.5" y="0.5" width="13.5" height="13.5" fill="#fff" stroke="#5e7fa8"/><rect x="6" y="1" width="7.5" height="2" fill="#8aa"/></svg>
<div class="t" style="left:77px;top:236px;font-size:11.6px;color:#111;">Elementos</div>
<div class="a" style="left:42px;top:243px;width:11px;height:1px;background:transparent;background-image:linear-gradient(90deg,#808080 50%,transparent 50%);background-size:2px 1px"></div>
<svg style="left:55px;top:236px;" width="15" height="15" viewBox="0 0 15 15"><rect x="0.5" y="0.5" width="13.5" height="13.5" fill="#fff" stroke="#5e7fa8"/><rect x="6" y="1" width="7.5" height="2" fill="#8aa"/><path d="M3 4 V11.5 H11" stroke="#5e7fa8" stroke-width="1.2" fill="none"/></svg>
<div class="t" style="left:77px;top:254px;font-size:11.6px;color:#111;">Portas</div>
<div class="a" style="left:42px;top:261px;width:11px;height:1px;background:transparent;background-image:linear-gradient(90deg,#808080 50%,transparent 50%);background-size:2px 1px"></div>
<svg style="left:55px;top:254px;" width="15" height="15" viewBox="0 0 15 15"><rect x="0.5" y="0.5" width="13.5" height="13.5" fill="#fff" stroke="#5e7fa8"/><rect x="6" y="1" width="7.5" height="2" fill="#8aa"/><rect x="5" y="4" width="4" height="8" fill="#2a4f80"/></svg>
<div class="t" style="left:77px;top:272px;font-size:11.6px;color:#111;">Janelas</div>
<div class="a" style="left:42px;top:279px;width:11px;height:1px;background:transparent;background-image:linear-gradient(90deg,#808080 50%,transparent 50%);background-size:2px 1px"></div>
<svg style="left:55px;top:272px;" width="15" height="15" viewBox="0 0 15 15"><rect x="0.5" y="0.5" width="13.5" height="13.5" fill="#fff" stroke="#5e7fa8"/><rect x="6" y="1" width="7.5" height="2" fill="#8aa"/><rect x="4" y="5" width="6" height="6" fill="#c8d4e4" stroke="#5e7fa8" stroke-width="0.8"/></svg>
<div class="t" style="left:77px;top:290px;font-size:11.6px;color:#111;">Pontes térmicas lineares</div>
<div class="a" style="left:42px;top:297px;width:11px;height:1px;background:transparent;background-image:linear-gradient(90deg,#808080 50%,transparent 50%);background-size:2px 1px"></div>
<svg style="left:55px;top:290px;" width="15" height="15" viewBox="0 0 15 15"><rect x="0.5" y="0.5" width="13.5" height="13.5" fill="#fff" stroke="#5e7fa8"/><rect x="6" y="1" width="7.5" height="2" fill="#8aa"/><path d="M3 4 V13 M3 7 H11 V10 H3" stroke="#5e7fa8" stroke-width="1" fill="#dde"/></svg>
<div class="t" style="left:56px;top:308px;font-size:11.6px;color:#111;">Projecto</div>
<svg style="left:17px;top:311px;" width="9" height="9" viewBox="0 0 9 9"><rect x="0.5" y="0.5" width="8" height="8" rx="1" fill="#f4f4f4" stroke="#8a8a8a"/><path d="M2 4.5 H7" stroke="#3050a0" stroke-width="1"/></svg>
<div class="a" style="left:27px;top:315px;width:5px;height:1px;background:transparent;background-image:linear-gradient(90deg,#808080 50%,transparent 50%);background-size:2px 1px"></div>
<svg style="left:34px;top:310px;" width="17" height="13" viewBox="0 0 17 13"><path d="M0.5 2.3 L3.5 0.3 L9.5 2.9 L6.5 4.8999999999999995Z" fill="#aab8cc"/><path d="M0.5 2.3 L6.5 4.8999999999999995 L6.5 8.9 L0.5 6.3Z" fill="#1f4f8f"/><path d="M6.5 4.8999999999999995 L9.5 2.9 L9.5 6.8999999999999995 L6.5 8.9Z" fill="#fff" stroke="#9ab0c8" stroke-width="0.6"/><path d="M7.5 5.2 L10.5 3.2 L16.5 5.800000000000001 L13.5 7.8Z" fill="#aab8cc"/><path d="M7.5 5.2 L13.5 7.8 L13.5 11.8 L7.5 9.2Z" fill="#1f4f8f"/><path d="M13.5 7.8 L16.5 5.800000000000001 L16.5 9.8 L13.5 11.8Z" fill="#fff" stroke="#9ab0c8" stroke-width="0.6"/></svg>
<div class="t" style="left:77px;top:326px;font-size:11.6px;color:#111;">Z01 - Zona útil Moradia</div>
<svg style="left:38px;top:329px;" width="9" height="9" viewBox="0 0 9 9"><rect x="0.5" y="0.5" width="8" height="8" rx="1" fill="#f4f4f4" stroke="#8a8a8a"/><path d="M2 4.5 H7" stroke="#3050a0" stroke-width="1"/></svg>
<div class="a" style="left:48px;top:333px;width:5px;height:1px;background:transparent;background-image:linear-gradient(90deg,#808080 50%,transparent 50%);background-size:2px 1px"></div>
<svg style="left:55px;top:328px;" width="17" height="13" viewBox="0 0 17 13"><path d="M0.5 2.3 L3.5 0.3 L9.5 2.9 L6.5 4.8999999999999995Z" fill="#aab8cc"/><path d="M0.5 2.3 L6.5 4.8999999999999995 L6.5 8.9 L0.5 6.3Z" fill="#1f4f8f"/><path d="M6.5 4.8999999999999995 L9.5 2.9 L9.5 6.8999999999999995 L6.5 8.9Z" fill="#fff" stroke="#9ab0c8" stroke-width="0.6"/><path d="M7.5 5.2 L10.5 3.2 L16.5 5.800000000000001 L13.5 7.8Z" fill="#aab8cc"/><path d="M7.5 5.2 L13.5 7.8 L13.5 11.8 L7.5 9.2Z" fill="#1f4f8f"/><path d="M13.5 7.8 L16.5 5.800000000000001 L16.5 9.8 L13.5 11.8Z" fill="#fff" stroke="#9ab0c8" stroke-width="0.6"/></svg>
<div class="t" style="left:98px;top:344px;font-size:11.6px;color:#111;">C01 - Circulação</div>
<svg style="left:59px;top:347px;" width="9" height="9" viewBox="0 0 9 9"><rect x="0.5" y="0.5" width="8" height="8" rx="1" fill="#f4f4f4" stroke="#8a8a8a"/><path d="M2 4.5 H7" stroke="#3050a0" stroke-width="1"/><path d="M4.5 2 V7" stroke="#3050a0" stroke-width="1"/></svg>
<div class="a" style="left:69px;top:351px;width:5px;height:1px;background:transparent;background-image:linear-gradient(90deg,#808080 50%,transparent 50%);background-size:2px 1px"></div>
<svg style="left:76px;top:345px;" width="13" height="13" viewBox="0 0 13 13"><path d="M0.5 3 L6 0.5 L12 3 L12 10 L6.5 12.5 L0.5 10Z" fill="#fff" stroke="#a8b8cc" stroke-width="0.8"/><path d="M0.5 3 L6.5 5.5 L6.5 12.5 L0.5 10Z" fill="#1f4f8f"/></svg>
<div class="t" style="left:98px;top:362px;font-size:11.6px;color:#111;">C02 - Sala de jogos</div>
<svg style="left:59px;top:365px;" width="9" height="9" viewBox="0 0 9 9"><rect x="0.5" y="0.5" width="8" height="8" rx="1" fill="#f4f4f4" stroke="#8a8a8a"/><path d="M2 4.5 H7" stroke="#3050a0" stroke-width="1"/><path d="M4.5 2 V7" stroke="#3050a0" stroke-width="1"/></svg>
<div class="a" style="left:69px;top:369px;width:5px;height:1px;background:transparent;background-image:linear-gradient(90deg,#808080 50%,transparent 50%);background-size:2px 1px"></div>
<svg style="left:76px;top:363px;" width="13" height="13" viewBox="0 0 13 13"><path d="M0.5 3 L6 0.5 L12 3 L12 10 L6.5 12.5 L0.5 10Z" fill="#fff" stroke="#a8b8cc" stroke-width="0.8"/><path d="M0.5 3 L6.5 5.5 L6.5 12.5 L0.5 10Z" fill="#1f4f8f"/></svg>
<div class="t" style="left:98px;top:380px;font-size:11.6px;color:#111;">C03 - Ginásio</div>
<svg style="left:59px;top:383px;" width="9" height="9" viewBox="0 0 9 9"><rect x="0.5" y="0.5" width="8" height="8" rx="1" fill="#f4f4f4" stroke="#8a8a8a"/><path d="M2 4.5 H7" stroke="#3050a0" stroke-width="1"/><path d="M4.5 2 V7" stroke="#3050a0" stroke-width="1"/></svg>
<div class="a" style="left:69px;top:387px;width:5px;height:1px;background:transparent;background-image:linear-gradient(90deg,#808080 50%,transparent 50%);background-size:2px 1px"></div>
<svg style="left:76px;top:381px;" width="13" height="13" viewBox="0 0 13 13"><path d="M0.5 3 L6 0.5 L12 3 L12 10 L6.5 12.5 L0.5 10Z" fill="#fff" stroke="#a8b8cc" stroke-width="0.8"/><path d="M0.5 3 L6.5 5.5 L6.5 12.5 L0.5 10Z" fill="#1f4f8f"/></svg>
<div class="t" style="left:98px;top:398px;font-size:11.6px;color:#111;">C04 - Cozinha</div>
<svg style="left:59px;top:401px;" width="9" height="9" viewBox="0 0 9 9"><rect x="0.5" y="0.5" width="8" height="8" rx="1" fill="#f4f4f4" stroke="#8a8a8a"/><path d="M2 4.5 H7" stroke="#3050a0" stroke-width="1"/><path d="M4.5 2 V7" stroke="#3050a0" stroke-width="1"/></svg>
<div class="a" style="left:69px;top:405px;width:5px;height:1px;background:transparent;background-image:linear-gradient(90deg,#808080 50%,transparent 50%);background-size:2px 1px"></div>
<svg style="left:76px;top:399px;" width="13" height="13" viewBox="0 0 13 13"><path d="M0.5 3 L6 0.5 L12 3 L12 10 L6.5 12.5 L0.5 10Z" fill="#fff" stroke="#a8b8cc" stroke-width="0.8"/><path d="M0.5 3 L6.5 5.5 L6.5 12.5 L0.5 10Z" fill="#1f4f8f"/></svg>
<div class="t" style="left:98px;top:416px;font-size:11.6px;color:#111;">C05 - Hall</div>
<svg style="left:59px;top:419px;" width="9" height="9" viewBox="0 0 9 9"><rect x="0.5" y="0.5" width="8" height="8" rx="1" fill="#f4f4f4" stroke="#8a8a8a"/><path d="M2 4.5 H7" stroke="#3050a0" stroke-width="1"/><path d="M4.5 2 V7" stroke="#3050a0" stroke-width="1"/></svg>
<div class="a" style="left:69px;top:423px;width:5px;height:1px;background:transparent;background-image:linear-gradient(90deg,#808080 50%,transparent 50%);background-size:2px 1px"></div>
<svg style="left:76px;top:417px;" width="13" height="13" viewBox="0 0 13 13"><path d="M0.5 3 L6 0.5 L12 3 L12 10 L6.5 12.5 L0.5 10Z" fill="#fff" stroke="#a8b8cc" stroke-width="0.8"/><path d="M0.5 3 L6.5 5.5 L6.5 12.5 L0.5 10Z" fill="#1f4f8f"/></svg>
<div class="t" style="left:98px;top:434px;font-size:11.6px;color:#111;">C06 - WC</div>
<svg style="left:59px;top:437px;" width="9" height="9" viewBox="0 0 9 9"><rect x="0.5" y="0.5" width="8" height="8" rx="1" fill="#f4f4f4" stroke="#8a8a8a"/><path d="M2 4.5 H7" stroke="#3050a0" stroke-width="1"/><path d="M4.5 2 V7" stroke="#3050a0" stroke-width="1"/></svg>
<div class="a" style="left:69px;top:441px;width:5px;height:1px;background:transparent;background-image:linear-gradient(90deg,#808080 50%,transparent 50%);background-size:2px 1px"></div>
<svg style="left:76px;top:435px;" width="13" height="13" viewBox="0 0 13 13"><path d="M0.5 3 L6 0.5 L12 3 L12 10 L6.5 12.5 L0.5 10Z" fill="#fff" stroke="#a8b8cc" stroke-width="0.8"/><path d="M0.5 3 L6.5 5.5 L6.5 12.5 L0.5 10Z" fill="#1f4f8f"/></svg>
<div class="t" style="left:98px;top:452px;font-size:11.6px;color:#111;">C07 - Arrumo</div>
<svg style="left:59px;top:455px;" width="9" height="9" viewBox="0 0 9 9"><rect x="0.5" y="0.5" width="8" height="8" rx="1" fill="#f4f4f4" stroke="#8a8a8a"/><path d="M2 4.5 H7" stroke="#3050a0" stroke-width="1"/><path d="M4.5 2 V7" stroke="#3050a0" stroke-width="1"/></svg>
<div class="a" style="left:69px;top:459px;width:5px;height:1px;background:transparent;background-image:linear-gradient(90deg,#808080 50%,transparent 50%);background-size:2px 1px"></div>
<svg style="left:76px;top:453px;" width="13" height="13" viewBox="0 0 13 13"><path d="M0.5 3 L6 0.5 L12 3 L12 10 L6.5 12.5 L0.5 10Z" fill="#fff" stroke="#a8b8cc" stroke-width="0.8"/><path d="M0.5 3 L6.5 5.5 L6.5 12.5 L0.5 10Z" fill="#1f4f8f"/></svg>
<div class="t" style="left:98px;top:470px;font-size:11.6px;color:#111;">C08 - Salão (Salão/Sala de jantar)</div>
<svg style="left:59px;top:473px;" width="9" height="9" viewBox="0 0 9 9"><rect x="0.5" y="0.5" width="8" height="8" rx="1" fill="#f4f4f4" stroke="#8a8a8a"/><path d="M2 4.5 H7" stroke="#3050a0" stroke-width="1"/><path d="M4.5 2 V7" stroke="#3050a0" stroke-width="1"/></svg>
<div class="a" style="left:69px;top:477px;width:5px;height:1px;background:transparent;background-image:linear-gradient(90deg,#808080 50%,transparent 50%);background-size:2px 1px"></div>
<svg style="left:76px;top:471px;" width="13" height="13" viewBox="0 0 13 13"><path d="M0.5 3 L6 0.5 L12 3 L12 10 L6.5 12.5 L0.5 10Z" fill="#fff" stroke="#a8b8cc" stroke-width="0.8"/><path d="M0.5 3 L6.5 5.5 L6.5 12.5 L0.5 10Z" fill="#1f4f8f"/></svg>
<div class="t" style="left:98px;top:488px;font-size:11.6px;color:#111;">C09 - Quarto 1</div>
<svg style="left:59px;top:491px;" width="9" height="9" viewBox="0 0 9 9"><rect x="0.5" y="0.5" width="8" height="8" rx="1" fill="#f4f4f4" stroke="#8a8a8a"/><path d="M2 4.5 H7" stroke="#3050a0" stroke-width="1"/><path d="M4.5 2 V7" stroke="#3050a0" stroke-width="1"/></svg>
<div class="a" style="left:69px;top:495px;width:5px;height:1px;background:transparent;background-image:linear-gradient(90deg,#808080 50%,transparent 50%);background-size:2px 1px"></div>
<svg style="left:76px;top:489px;" width="13" height="13" viewBox="0 0 13 13"><path d="M0.5 3 L6 0.5 L12 3 L12 10 L6.5 12.5 L0.5 10Z" fill="#fff" stroke="#a8b8cc" stroke-width="0.8"/><path d="M0.5 3 L6.5 5.5 L6.5 12.5 L0.5 10Z" fill="#1f4f8f"/></svg>
<div class="t" style="left:98px;top:506px;font-size:11.6px;color:#111;">C10 - Quarto 2</div>
<svg style="left:59px;top:509px;" width="9" height="9" viewBox="0 0 9 9"><rect x="0.5" y="0.5" width="8" height="8" rx="1" fill="#f4f4f4" stroke="#8a8a8a"/><path d="M2 4.5 H7" stroke="#3050a0" stroke-width="1"/><path d="M4.5 2 V7" stroke="#3050a0" stroke-width="1"/></svg>
<div class="a" style="left:69px;top:513px;width:5px;height:1px;background:transparent;background-image:linear-gradient(90deg,#808080 50%,transparent 50%);background-size:2px 1px"></div>
<svg style="left:76px;top:507px;" width="13" height="13" viewBox="0 0 13 13"><path d="M0.5 3 L6 0.5 L12 3 L12 10 L6.5 12.5 L0.5 10Z" fill="#fff" stroke="#a8b8cc" stroke-width="0.8"/><path d="M0.5 3 L6.5 5.5 L6.5 12.5 L0.5 10Z" fill="#1f4f8f"/></svg>
<div class="t" style="left:98px;top:524px;font-size:11.6px;color:#111;">C11 - Quarto 3</div>
<svg style="left:59px;top:527px;" width="9" height="9" viewBox="0 0 9 9"><rect x="0.5" y="0.5" width="8" height="8" rx="1" fill="#f4f4f4" stroke="#8a8a8a"/><path d="M2 4.5 H7" stroke="#3050a0" stroke-width="1"/><path d="M4.5 2 V7" stroke="#3050a0" stroke-width="1"/></svg>
<div class="a" style="left:69px;top:531px;width:5px;height:1px;background:transparent;background-image:linear-gradient(90deg,#808080 50%,transparent 50%);background-size:2px 1px"></div>
<svg style="left:76px;top:525px;" width="13" height="13" viewBox="0 0 13 13"><path d="M0.5 3 L6 0.5 L12 3 L12 10 L6.5 12.5 L0.5 10Z" fill="#fff" stroke="#a8b8cc" stroke-width="0.8"/><path d="M0.5 3 L6.5 5.5 L6.5 12.5 L0.5 10Z" fill="#1f4f8f"/></svg>
<div class="t" style="left:98px;top:542px;font-size:11.6px;color:#111;">C12 - Quarto 4</div>
<svg style="left:59px;top:545px;" width="9" height="9" viewBox="0 0 9 9"><rect x="0.5" y="0.5" width="8" height="8" rx="1" fill="#f4f4f4" stroke="#8a8a8a"/><path d="M2 4.5 H7" stroke="#3050a0" stroke-width="1"/><path d="M4.5 2 V7" stroke="#3050a0" stroke-width="1"/></svg>
<div class="a" style="left:69px;top:549px;width:5px;height:1px;background:transparent;background-image:linear-gradient(90deg,#808080 50%,transparent 50%);background-size:2px 1px"></div>
<svg style="left:76px;top:543px;" width="13" height="13" viewBox="0 0 13 13"><path d="M0.5 3 L6 0.5 L12 3 L12 10 L6.5 12.5 L0.5 10Z" fill="#fff" stroke="#a8b8cc" stroke-width="0.8"/><path d="M0.5 3 L6.5 5.5 L6.5 12.5 L0.5 10Z" fill="#1f4f8f"/></svg>
<div class="t" style="left:98px;top:560px;font-size:11.6px;color:#111;">C13 - Casa de banho 1</div>
<svg style="left:59px;top:563px;" width="9" height="9" viewBox="0 0 9 9"><rect x="0.5" y="0.5" width="8" height="8" rx="1" fill="#f4f4f4" stroke="#8a8a8a"/><path d="M2 4.5 H7" stroke="#3050a0" stroke-width="1"/><path d="M4.5 2 V7" stroke="#3050a0" stroke-width="1"/></svg>
<div class="a" style="left:69px;top:567px;width:5px;height:1px;background:transparent;background-image:linear-gradient(90deg,#808080 50%,transparent 50%);background-size:2px 1px"></div>
<svg style="left:76px;top:561px;" width="13" height="13" viewBox="0 0 13 13"><path d="M0.5 3 L6 0.5 L12 3 L12 10 L6.5 12.5 L0.5 10Z" fill="#fff" stroke="#a8b8cc" stroke-width="0.8"/><path d="M0.5 3 L6.5 5.5 L6.5 12.5 L0.5 10Z" fill="#1f4f8f"/></svg>
<div class="t" style="left:98px;top:578px;font-size:11.6px;color:#111;">C14 - Casa de banho 2</div>
<svg style="left:59px;top:581px;" width="9" height="9" viewBox="0 0 9 9"><rect x="0.5" y="0.5" width="8" height="8" rx="1" fill="#f4f4f4" stroke="#8a8a8a"/><path d="M2 4.5 H7" stroke="#3050a0" stroke-width="1"/><path d="M4.5 2 V7" stroke="#3050a0" stroke-width="1"/></svg>
<div class="a" style="left:69px;top:585px;width:5px;height:1px;background:transparent;background-image:linear-gradient(90deg,#808080 50%,transparent 50%);background-size:2px 1px"></div>
<svg style="left:76px;top:579px;" width="13" height="13" viewBox="0 0 13 13"><path d="M0.5 3 L6 0.5 L12 3 L12 10 L6.5 12.5 L0.5 10Z" fill="#fff" stroke="#a8b8cc" stroke-width="0.8"/><path d="M0.5 3 L6.5 5.5 L6.5 12.5 L0.5 10Z" fill="#1f4f8f"/></svg>
<div class="t" style="left:98px;top:596px;font-size:11.6px;color:#111;">C15 - Corredor (Circulação)</div>
<svg style="left:59px;top:599px;" width="9" height="9" viewBox="0 0 9 9"><rect x="0.5" y="0.5" width="8" height="8" rx="1" fill="#f4f4f4" stroke="#8a8a8a"/><path d="M2 4.5 H7" stroke="#3050a0" stroke-width="1"/><path d="M4.5 2 V7" stroke="#3050a0" stroke-width="1"/></svg>
<div class="a" style="left:69px;top:603px;width:5px;height:1px;background:transparent;background-image:linear-gradient(90deg,#808080 50%,transparent 50%);background-size:2px 1px"></div>
<svg style="left:76px;top:597px;" width="13" height="13" viewBox="0 0 13 13"><path d="M0.5 3 L6 0.5 L12 3 L12 10 L6.5 12.5 L0.5 10Z" fill="#fff" stroke="#a8b8cc" stroke-width="0.8"/><path d="M0.5 3 L6.5 5.5 L6.5 12.5 L0.5 10Z" fill="#1f4f8f"/></svg>
<div class="t" style="left:77px;top:614px;font-size:11.6px;color:#111;">Z02 - Zona não útil</div>
<svg style="left:38px;top:617px;" width="9" height="9" viewBox="0 0 9 9"><rect x="0.5" y="0.5" width="8" height="8" rx="1" fill="#f4f4f4" stroke="#8a8a8a"/><path d="M2 4.5 H7" stroke="#3050a0" stroke-width="1"/></svg>
<div class="a" style="left:48px;top:621px;width:5px;height:1px;background:transparent;background-image:linear-gradient(90deg,#808080 50%,transparent 50%);background-size:2px 1px"></div>
<svg style="left:55px;top:616px;" width="17" height="13" viewBox="0 0 17 13"><path d="M0.5 2.3 L3.5 0.3 L9.5 2.9 L6.5 4.8999999999999995Z" fill="#aab8cc"/><path d="M0.5 2.3 L6.5 4.8999999999999995 L6.5 8.9 L0.5 6.3Z" fill="#1f4f8f"/><path d="M6.5 4.8999999999999995 L9.5 2.9 L9.5 6.8999999999999995 L6.5 8.9Z" fill="#fff" stroke="#9ab0c8" stroke-width="0.6"/><path d="M7.5 5.2 L10.5 3.2 L16.5 5.800000000000001 L13.5 7.8Z" fill="#aab8cc"/><path d="M7.5 5.2 L13.5 7.8 L13.5 11.8 L7.5 9.2Z" fill="#1f4f8f"/><path d="M13.5 7.8 L16.5 5.800000000000001 L16.5 9.8 L13.5 11.8Z" fill="#fff" stroke="#9ab0c8" stroke-width="0.6"/></svg>
<div class="t" style="left:98px;top:632px;font-size:11.6px;color:#111;">C01 - Garagem</div>
<svg style="left:59px;top:635px;" width="9" height="9" viewBox="0 0 9 9"><rect x="0.5" y="0.5" width="8" height="8" rx="1" fill="#f4f4f4" stroke="#8a8a8a"/><path d="M2 4.5 H7" stroke="#3050a0" stroke-width="1"/><path d="M4.5 2 V7" stroke="#3050a0" stroke-width="1"/></svg>
<div class="a" style="left:69px;top:639px;width:5px;height:1px;background:transparent;background-image:linear-gradient(90deg,#808080 50%,transparent 50%);background-size:2px 1px"></div>
<svg style="left:76px;top:633px;" width="13" height="13" viewBox="0 0 13 13"><path d="M0.5 3 L6 0.5 L12 3 L12 10 L6.5 12.5 L0.5 10Z" fill="#fff" stroke="#a8b8cc" stroke-width="0.8"/><path d="M0.5 3 L6.5 5.5 L6.5 12.5 L0.5 10Z" fill="#1f4f8f"/></svg>
<div class="a" style="left:286px;top:574px;width:1px;height:1px;background:#a0a0a0;"></div>
<div class="a" style="left:288px;top:574px;width:1px;height:1px;background:#a0a0a0;"></div>
<div class="a" style="left:286px;top:577px;width:1px;height:1px;background:#a0a0a0;"></div>
<div class="a" style="left:288px;top:577px;width:1px;height:1px;background:#a0a0a0;"></div>
<div class="a" style="left:286px;top:580px;width:1px;height:1px;background:#a0a0a0;"></div>
<div class="a" style="left:288px;top:580px;width:1px;height:1px;background:#a0a0a0;"></div>
<div class="a" style="left:286px;top:583px;width:1px;height:1px;background:#a0a0a0;"></div>
<div class="a" style="left:288px;top:583px;width:1px;height:1px;background:#a0a0a0;"></div>
<div class="a" style="left:291px;top:174px;width:826px;height:812px;border:1px solid #c8c8c8"></div>
<div class="a" style="left:300px;top:207px;width:399px;height:770px;border:1px solid #c8c8c8"></div>
<svg style="left:301px;top:184px;" width="14" height="22" viewBox="0 0 14 22"><rect x="0.5" y="0.5" width="13" height="20.5" fill="#f0f0f0" stroke="#a0a0a0"/><path d="M9 6 L5 10.5 L9 15Z" fill="#555"/></svg>
<svg style="left:319px;top:188px;" width="14" height="14" viewBox="0 0 14 14"><path d="M7 0 V14 M0 7 H14" stroke="#222" stroke-width="1.6"/></svg>
<svg style="left:341px;top:188px;" width="15" height="15" viewBox="0 0 15 15"><path d="M1 14 L2.5 9.5 L11 1 Q12.5 0 14 1.5 Q15 3 14 4 L5.5 12.5Z" fill="#e8c840" stroke="#555" stroke-width="0.8"/><path d="M1 14 L2.5 9.5 L5.5 12.5Z" fill="#fff" stroke="#555" stroke-width="0.8"/></svg>
<svg style="left:364px;top:187px;" width="16" height="16" viewBox="0 0 16 16"><rect x="5.5" y="0.5" width="10" height="10" fill="#fff" stroke="#999"/><rect x="0.5" y="5.5" width="10" height="10" fill="#c4c4c4" stroke="#999"/></svg>
<svg style="left:388px;top:188px;" width="14" height="14" viewBox="0 0 14 14"><path d="M1.5 1.5 L12.5 12.5 M12.5 1.5 L1.5 12.5" stroke="#d85c5c" stroke-width="2.2" stroke-linecap="round"/></svg>
<div class="a" style="left:409px;top:186px;width:1px;height:19px;background:#888;"></div>
<svg style="left:419px;top:190px;" width="14" height="8" viewBox="0 0 14 8"><path d="M0 8 L7 0.5 L14 8Z" fill="#333"/></svg>
<svg style="left:442px;top:190px;" width="14" height="8" viewBox="0 0 14 8"><path d="M0 0 L7 7.5 L14 0Z" fill="#333"/></svg>
<div class="a" style="left:463px;top:186px;width:1px;height:19px;background:#888;"></div>
<svg style="left:473px;top:187px;" width="16" height="17" viewBox="0 0 16 17"><path d="M0.5 1 H6 L7.5 3.5 H15 V14 H0.5Z" fill="#ffd850" stroke="#f0b030" stroke-width="0.8"/><path d="M14 9 Q9 9 8 14 L6 12 L7 16 L11 15 Q10 11 14 11Z" fill="#20a060"/></svg>
<svg style="left:496px;top:187px;" width="16" height="17" viewBox="0 0 16 17"><path d="M0.5 1 H6 L7.5 3.5 H15 V14 H0.5Z" fill="#ffd850" stroke="#f0b030" stroke-width="0.8"/><path d="M14 9 Q9 9 8 14 L6 12 L7 16 L11 15 Q10 11 14 11Z" fill="#d02030"/></svg>
<svg style="left:518px;top:187px;" width="16" height="16" viewBox="0 0 16 16"><path d="M1 7 L8 1 L15 7" fill="none" stroke="#8aa8d0" stroke-width="1"/><path d="M3 6 V14.5 H13 V6" fill="none" stroke="#9ab4d8" stroke-width="0.8"/><path d="M12 6 V14" stroke="#f06060" stroke-width="1.2"/><path d="M3 9 L7 5.5 V7.5 H12 V10.5 H7 V12.5Z" fill="#40a020"/></svg>
<svg style="left:541px;top:187px;" width="16" height="16" viewBox="0 0 16 16"><path d="M1 7 L8 1 L15 7" fill="none" stroke="#8aa8d0" stroke-width="1"/><path d="M3 6 V14.5 H13 V6" fill="none" stroke="#9ab4d8" stroke-width="0.8"/><path d="M8 3 V6" stroke="#f06060"/><path d="M3 9 L7 5.5 V7.5 H12 V10.5 H7 V12.5Z" fill="#40a020"/></svg>
<svg style="left:564px;top:187px;" width="16" height="16" viewBox="0 0 16 16"><path d="M1 7 L8 1 L15 7" fill="none" stroke="#8aa8d0" stroke-width="1"/><path d="M3 6 V14.5 H13 V6" fill="none" stroke="#9ab4d8" stroke-width="0.8"/><path d="M12 10 V14 H8" stroke="#f04040" stroke-width="1.2" fill="none"/><path d="M3 9 L7 5.5 V7.5 H12 V10.5 H7 V12.5Z" fill="#40a020"/></svg>
<svg style="left:587px;top:187px;" width="16" height="16" viewBox="0 0 16 16"><path d="M1 7 L8 1 L15 7" fill="none" stroke="#8aa8d0" stroke-width="1"/><path d="M3 6 V14.5 H13 V6" fill="none" stroke="#9ab4d8" stroke-width="0.8"/><path d="M3 14.5 H13" stroke="#f04040" stroke-width="1.2"/><path d="M3 9 L7 5.5 V7.5 H12 V10.5 H7 V12.5Z" fill="#40a020"/></svg>
<svg style="left:610px;top:187px;" width="16" height="16" viewBox="0 0 16 16"><path d="M1 7 L8 1 L15 7" fill="none" stroke="#8aa8d0" stroke-width="1"/><path d="M3 6 V14.5 H13 V6" fill="none" stroke="#9ab4d8" stroke-width="0.8"/><path d="M7 6 H13" stroke="#f06060" stroke-width="1.2"/><path d="M3 9 L7 5.5 V7.5 H12 V10.5 H7 V12.5Z" fill="#40a020"/></svg>
<svg style="left:633px;top:187px;" width="16" height="16" viewBox="0 0 16 16"><path d="M1 7 L8 1 L15 7" fill="none" stroke="#f02020" stroke-width="1"/><path d="M3 6 V14.5 H13 V6" fill="none" stroke="#9ab4d8" stroke-width="0.8"/><path d="M3 9 L7 5.5 V7.5 H12 V10.5 H7 V12.5Z" fill="#40a020"/></svg>
<svg style="left:656px;top:187px;" width="16" height="16" viewBox="0 0 16 16"><path d="M1 7 L8 1 L15 7" fill="none" stroke="#8aa8d0" stroke-width="1"/><path d="M3 6 V14.5 H13 V6" fill="none" stroke="#9ab4d8" stroke-width="0.8"/><path d="M3 6 V14" stroke="#f06060"/><path d="M13 9 L9 5.5 V7.5 H3 V10.5 H9 V12.5Z" fill="#d02030"/></svg>
<svg style="left:679px;top:187px;" width="8" height="16" viewBox="0 0 8 16"><path d="M7 7 L7 14" stroke="#9ab4d8" stroke-width="0.8"/><path d="M5 3 L8 1" stroke="#9ab4d8"/></svg>
<svg style="left:684px;top:184px;" width="14" height="22" viewBox="0 0 14 22"><rect x="0.5" y="0.5" width="13" height="20.5" fill="#f0f0f0" stroke="#a0a0a0"/><path d="M5 6 L10 10.5 L5 15Z" fill="#000"/></svg>
<div class="a" style="left:302px;top:209px;width:395px;height:22px;background:#f0f0f0;"></div>
<div class="a" style="left:325px;top:212px;width:1px;height:17px;background:#d4d4d4;"></div>
<div class="a" style="left:551px;top:212px;width:1px;height:17px;background:#d4d4d4;"></div>
<div class="a" style="left:665px;top:212px;width:1px;height:17px;background:#d4d4d4;"></div>
<div class="a" style="left:696px;top:212px;width:1px;height:17px;background:#d4d4d4;"></div>
<div class="t" style="left:333px;top:214px;color:#111;">Referência</div>
<div class="t" style="left:558px;top:214px;color:#111;">Tipo</div>
<div class="a" style="left:302px;top:231px;width:395px;height:1px;background:#e6e6e6;"></div>
<div class="a" style="left:302px;top:232px;width:23px;height:19px;background:#ffffd0;"></div>
<div class="a" style="left:302px;top:251px;width:395px;height:1px;background:#ededed;"></div>
<div class="a" style="left:325px;top:232px;width:1px;height:19px;background:#ededed;"></div>
<div class="a" style="left:551px;top:232px;width:1px;height:19px;background:#ededed;"></div>
<div class="a" style="left:665px;top:232px;width:1px;height:19px;background:#ededed;"></div>
<div class="a" style="left:696px;top:232px;width:1px;height:19px;background:#ededed;"></div>
<div class="t" style="left:311.5px;top:235px;color:#111;width:7px;text-align:right">1</div>
<div class="t" style="left:333px;top:235px;font-size:11.95px;color:#111;">Pavimento térreo</div>
<div class="t" style="left:558px;top:235px;font-size:11.8px;color:#111;">Laje térrea</div>
<div class="a" style="left:302px;top:252px;width:23px;height:19px;background:#ffffd0;"></div>
<div class="a" style="left:326px;top:252px;width:225px;height:19px;background:#c0c0c0;"></div>
<div class="a" style="left:552px;top:252px;width:145px;height:19px;background:#e4e4e4;"></div>
<div class="a" style="left:302px;top:271px;width:395px;height:1px;background:#ededed;"></div>
<div class="a" style="left:325px;top:252px;width:1px;height:19px;background:#ededed;"></div>
<div class="a" style="left:551px;top:252px;width:1px;height:19px;background:#ededed;"></div>
<div class="a" style="left:665px;top:252px;width:1px;height:19px;background:#ededed;"></div>
<div class="a" style="left:696px;top:252px;width:1px;height:19px;background:#ededed;"></div>
<div class="t" style="left:311.5px;top:255px;color:#111;width:7px;text-align:right">2</div>
<div class="t" style="left:333px;top:255px;font-size:11.78px;color:#111;">Cobertura plana</div>
<div class="t" style="left:558px;top:255px;font-size:11.8px;color:#111;">Cobertura</div>
<div class="a" style="left:302px;top:272px;width:23px;height:19px;background:#ffffd0;"></div>
<div class="a" style="left:302px;top:291px;width:395px;height:1px;background:#ededed;"></div>
<div class="a" style="left:325px;top:272px;width:1px;height:19px;background:#ededed;"></div>
<div class="a" style="left:551px;top:272px;width:1px;height:19px;background:#ededed;"></div>
<div class="a" style="left:665px;top:272px;width:1px;height:19px;background:#ededed;"></div>
<div class="a" style="left:696px;top:272px;width:1px;height:19px;background:#ededed;"></div>
<div class="t" style="left:311.5px;top:275px;color:#111;width:7px;text-align:right">3</div>
<div class="t" style="left:333px;top:275px;font-size:11.51px;color:#111;">Maciça (RS Cerâmico; RI Teto falso MW)</div>
<div class="t" style="left:558px;top:275px;font-size:11.41px;color:#111;">Laje entre pisos</div>
<div class="a" style="left:302px;top:292px;width:23px;height:19px;background:#ffffd0;"></div>
<div class="a" style="left:302px;top:311px;width:395px;height:1px;background:#ededed;"></div>
<div class="a" style="left:325px;top:292px;width:1px;height:19px;background:#ededed;"></div>
<div class="a" style="left:551px;top:292px;width:1px;height:19px;background:#ededed;"></div>
<div class="a" style="left:665px;top:292px;width:1px;height:19px;background:#ededed;"></div>
<div class="a" style="left:696px;top:292px;width:1px;height:19px;background:#ededed;"></div>
<div class="t" style="left:311.5px;top:295px;color:#111;width:7px;text-align:right">4</div>
<div class="t" style="left:333px;top:295px;font-size:11.29px;color:#111;">Sistema ETICS + Bloco betão</div>
<div class="t" style="left:558px;top:295px;font-size:11.6px;color:#111;">Fachada</div>
<div class="a" style="left:302px;top:312px;width:23px;height:19px;background:#ffffd0;"></div>
<div class="a" style="left:302px;top:331px;width:395px;height:1px;background:#ededed;"></div>
<div class="a" style="left:325px;top:312px;width:1px;height:19px;background:#ededed;"></div>
<div class="a" style="left:551px;top:312px;width:1px;height:19px;background:#ededed;"></div>
<div class="a" style="left:665px;top:312px;width:1px;height:19px;background:#ededed;"></div>
<div class="a" style="left:696px;top:312px;width:1px;height:19px;background:#ededed;"></div>
<div class="t" style="left:311.5px;top:315px;color:#111;width:7px;text-align:right">5</div>
<div class="t" style="left:333px;top:315px;font-size:11.64px;color:#111;">Tradicional dupla 11+XPS+11</div>
<div class="t" style="left:558px;top:315px;font-size:11.6px;color:#111;">Meeira</div>
<div class="a" style="left:302px;top:332px;width:23px;height:19px;background:#ffffd0;"></div>
<div class="a" style="left:302px;top:351px;width:395px;height:1px;background:#ededed;"></div>
<div class="a" style="left:325px;top:332px;width:1px;height:19px;background:#ededed;"></div>
<div class="a" style="left:551px;top:332px;width:1px;height:19px;background:#ededed;"></div>
<div class="a" style="left:665px;top:332px;width:1px;height:19px;background:#ededed;"></div>
<div class="a" style="left:696px;top:332px;width:1px;height:19px;background:#ededed;"></div>
<div class="t" style="left:311.5px;top:335px;color:#111;width:7px;text-align:right">6</div>
<div class="t" style="left:333px;top:335px;font-size:11.29px;color:#111;">Sistema ETICS + Tijolo 11</div>
<div class="t" style="left:558px;top:335px;font-size:11.74px;color:#111;">Parede interior</div>
<div class="a" style="left:302px;top:352px;width:23px;height:19px;background:#ffffd0;"></div>
<div class="a" style="left:302px;top:371px;width:395px;height:1px;background:#ededed;"></div>
<div class="a" style="left:325px;top:352px;width:1px;height:19px;background:#ededed;"></div>
<div class="a" style="left:551px;top:352px;width:1px;height:19px;background:#ededed;"></div>
<div class="a" style="left:665px;top:352px;width:1px;height:19px;background:#ededed;"></div>
<div class="a" style="left:696px;top:352px;width:1px;height:19px;background:#ededed;"></div>
<div class="t" style="left:311.5px;top:355px;color:#111;width:7px;text-align:right">7</div>
<div class="t" style="left:333px;top:355px;font-size:11.42px;color:#111;">Maciça (RS Cerâmico; RI Teto falso)</div>
<div class="t" style="left:558px;top:355px;font-size:11.41px;color:#111;">Laje entre pisos</div>
<div class="a" style="left:302px;top:372px;width:23px;height:19px;background:#ffffd0;"></div>
<div class="a" style="left:302px;top:391px;width:395px;height:1px;background:#ededed;"></div>
<div class="a" style="left:325px;top:372px;width:1px;height:19px;background:#ededed;"></div>
<div class="a" style="left:551px;top:372px;width:1px;height:19px;background:#ededed;"></div>
<div class="a" style="left:665px;top:372px;width:1px;height:19px;background:#ededed;"></div>
<div class="a" style="left:696px;top:372px;width:1px;height:19px;background:#ededed;"></div>
<div class="t" style="left:311.5px;top:375px;color:#111;width:7px;text-align:right">8</div>
<div class="t" style="left:333px;top:375px;font-size:11.27px;color:#111;">Simples de 11</div>
<div class="t" style="left:558px;top:375px;font-size:11.74px;color:#111;">Parede interior</div>
<div class="a" style="left:302px;top:392px;width:23px;height:19px;background:#ffffd0;"></div>
<div class="a" style="left:302px;top:411px;width:395px;height:1px;background:#ededed;"></div>
<div class="a" style="left:325px;top:392px;width:1px;height:19px;background:#ededed;"></div>
<div class="a" style="left:551px;top:392px;width:1px;height:19px;background:#ededed;"></div>
<div class="a" style="left:665px;top:392px;width:1px;height:19px;background:#ededed;"></div>
<div class="a" style="left:696px;top:392px;width:1px;height:19px;background:#ededed;"></div>
<div class="t" style="left:311.5px;top:395px;color:#111;width:7px;text-align:right">9</div>
<div class="t" style="left:333px;top:395px;font-size:11.01px;color:#111;">Maciça (RS Cerâmico; RI ETICS)</div>
<div class="t" style="left:558px;top:395px;font-size:11.6px;color:#111;">Consola</div>
<div class="a" style="left:702px;top:574px;width:1px;height:1px;background:#a0a0a0;"></div>
<div class="a" style="left:704px;top:574px;width:1px;height:1px;background:#a0a0a0;"></div>
<div class="a" style="left:702px;top:577px;width:1px;height:1px;background:#a0a0a0;"></div>
<div class="a" style="left:704px;top:577px;width:1px;height:1px;background:#a0a0a0;"></div>
<div class="a" style="left:702px;top:580px;width:1px;height:1px;background:#a0a0a0;"></div>
<div class="a" style="left:704px;top:580px;width:1px;height:1px;background:#a0a0a0;"></div>
<div class="a" style="left:702px;top:583px;width:1px;height:1px;background:#a0a0a0;"></div>
<div class="a" style="left:704px;top:583px;width:1px;height:1px;background:#a0a0a0;"></div>
<div class="a" style="left:707px;top:207px;width:400px;height:770px;border:1px solid #7f9dc0;background:#fff"></div>
<svg style="left:711.0px;top:187px;" width="17" height="17" viewBox="0 0 17 17"><circle cx="8" cy="6.5" r="5.3" fill="#fff" stroke="#111" stroke-width="1.2"/><path d="M11.5 10 L15.5 14.5" stroke="#111" stroke-width="2"/><path d="M13 6 Q12 0 7 1 Q2 3 3 11" fill="none" stroke="#0000ff" stroke-width="1.8"/><path d="M0 10 L6 10 L3 15Z" fill="#0000ff"/></svg>
<svg style="left:736.1px;top:187px;" width="17" height="17" viewBox="0 0 17 17"><circle cx="7" cy="7" r="6.5" fill="#fff" stroke="#111" stroke-width="1.2"/><path d="M11.5 11.5 L15.5 15.5" stroke="#111" stroke-width="2"/><path d="M7 1.5 V12.5 M1.5 7 H12.5" stroke="#0000ff" stroke-width="1"/><path d="M7 1 L5 3.5 H9Z M7 13 L5 10.5 H9Z M1 7 L3.5 5 V9Z M13 7 L10.5 5 V9Z" fill="#0000ff"/></svg>
<svg style="left:761.2px;top:187px;" width="17" height="17" viewBox="0 0 17 17"><circle cx="7" cy="7" r="6.5" fill="#fff" stroke="#111" stroke-width="1.2"/><path d="M11.5 11.5 L15.5 15.5" stroke="#111" stroke-width="2"/><text x="7.3" y="10" font-family="Liberation Sans" font-size="8" text-anchor="middle" fill="#0000ff">×2</text></svg>
<svg style="left:786.3px;top:187px;" width="17" height="17" viewBox="0 0 17 17"><path d="M13 4 Q9 -1 4 2 Q0 6 3 11" fill="none" stroke="#0000ff" stroke-width="1.4"/><path d="M10 0 L15 0 L15 5Z" fill="#0000ff"/><path d="M8 15 L14 9 L16 11 L10 16Z" fill="#f0e030" stroke="#111" stroke-width="0.7"/><circle cx="15" cy="10" r="1.3" fill="#e00"/><path d="M0 16 H8" stroke="#111" stroke-width="0.8"/></svg>
<svg style="left:811.4px;top:187px;" width="17" height="17" viewBox="0 0 17 17"><circle cx="8" cy="6" r="5" fill="#def" stroke="#111" stroke-width="1.1"/><path d="M11.5 9.5 L15.5 13.5" stroke="#111" stroke-width="2"/><rect x="0.5" y="5.5" width="7" height="10" fill="none" stroke="#0000ff" stroke-width="0.9" stroke-dasharray="1 1"/></svg>
<svg style="left:836.5px;top:187px;" width="15" height="17" viewBox="0 0 15 17"><path d="M3 9 V3 Q3 2 4 2 Q5 2 5 3 V8 V1.5 Q5 0.5 6.2 0.5 Q7.4 0.5 7.4 1.5 V8 V2 Q7.4 1 8.6 1 Q9.8 1 9.8 2 V8 V3.5 Q9.8 2.5 11 2.5 Q12 2.5 12 3.5 V10 Q12 15 9 16 H6 Q4 16 3 14 L0.5 10 Q0 9 1 8.6 Q2 8.4 3 9.5Z" fill="#fff" stroke="#111" stroke-width="0.9"/></svg>
<svg style="left:861.6px;top:187px;" width="17" height="17" viewBox="0 0 17 17"><rect x="0.5" y="0.5" width="14" height="10" fill="#fff" stroke="#222"/><rect x="1" y="1" width="13" height="2.5" fill="#00e0f0"/><rect x="6.5" y="6.5" width="10" height="10" fill="#fff" stroke="#222"/><path d="M2 7 Q6 4 10 8 L12 11" fill="none" stroke="#0000ff" stroke-width="1.5"/><path d="M9 12 L13 13 L13 9Z" fill="#0000ff"/></svg>
<svg style="left:0px;top:0px;left:0;top:0" width="1" height="1" viewBox="0 0 1 1"><defs>
<pattern id="p1" patternUnits="userSpaceOnUse" x="776" y="356" width="59.5" height="39">
<path d="M9 23 Q11 16 19 15 Q20 21 12 24Z" fill="none" stroke="#000" stroke-width="1.1"/>
<ellipse cx="44.5" cy="13" rx="5.5" ry="2.6" fill="none" stroke="#000" stroke-width="1.1"/>
<ellipse cx="50.5" cy="30.5" rx="5.5" ry="2.6" fill="none" stroke="#000" stroke-width="1.1"/>
<rect x="2" y="14" width="1" height="2" fill="#000"/><rect x="19" y="12" width="1" height="2" fill="#000"/><rect x="3" y="25" width="1" height="1" fill="#000"/>
<rect x="19" y="26" width="1" height="2" fill="#000"/><rect x="9" y="31" width="1" height="1" fill="#000"/><rect x="31" y="19" width="1" height="2" fill="#000"/>
<rect x="32" y="25" width="1" height="1" fill="#000"/><rect x="44" y="19" width="1" height="1" fill="#000"/><rect x="49" y="25" width="1" height="2" fill="#000"/>
<rect x="37" y="30" width="1" height="2" fill="#000"/><rect x="56" y="13" width="1" height="2" fill="#000"/><rect x="57" y="25" width="1" height="1" fill="#000"/>
</pattern>
<pattern id="p2" patternUnits="userSpaceOnUse" x="776" y="396" width="8.15" height="24">
<path d="M1 0 Q7 12 3.5 24 M7 0 Q1 12 4.5 24" fill="none" stroke="#000" stroke-width="0.9"/>
</pattern>
<pattern id="p3" patternUnits="userSpaceOnUse" x="776" y="420" width="39.6" height="40">
<path d="M19.5 4.3 V8.3 L22.5 6.3Z" fill="none" stroke="#000" stroke-width="0.9"/>
<path d="M28 16.4 V20.4 L24.5 18.4Z" fill="none" stroke="#000" stroke-width="0.9"/>
<path d="M3.5 24.4 V28.4 L6.5 26.4Z" fill="none" stroke="#000" stroke-width="0.9"/>
<path d="M15 33 L17 29 L19 33Z" fill="none" stroke="#000" stroke-width="0.9"/>
<path d="M7.5 35.8 L11.5 35.8 L9.5 39.3Z" fill="none" stroke="#000" stroke-width="0.9"/>
<rect x="7" y="11" width="1" height="2" fill="#000"/><rect x="26" y="15" width="1" height="2" fill="#000"/><rect x="31" y="23" width="1" height="2" fill="#000"/>
<rect x="3" y="35" width="1" height="2" fill="#000"/><rect x="35" y="3" width="1" height="2" fill="#000"/><rect x="36" y="32" width="1" height="1" fill="#000"/><rect x="37" y="31" width="1" height="1" fill="#000"/>
</pattern>
</defs><rect x="776" y="356" width="238" height="39.5" fill="#c0c0c0"/><rect x="776" y="356" width="238" height="39.5" fill="url(#p1)"/><clipPath id="cb"><rect x="776" y="395.5" width="238" height="24.5"/></clipPath><rect x="776" y="395.5" width="238" height="24.5" fill="#0000ff"/><path clip-path="url(#cb)" d="M773.8 413 L771.2 401 Q771.2 396.6 775.0 396.6 Q778.8 396.6 778.8 401 L776.2 413 Q776.2 419.4 779.0 419.4 Q781.8 419.4 781.8 413 L779.2 401 Q779.2 396.6 783.0 396.6 Q786.8 396.6 786.8 401 L784.2 413 Q784.2 419.4 787.0 419.4 Q789.8 419.4 789.8 413 L787.2 401 Q787.2 396.6 791.0 396.6 Q794.8 396.6 794.8 401 L792.2 413 Q792.2 419.4 795.0 419.4 Q797.8 419.4 797.8 413 L795.2 401 Q795.2 396.6 799.0 396.6 Q802.8 396.6 802.8 401 L800.2 413 Q800.2 419.4 803.0 419.4 Q805.8 419.4 805.8 413 L803.2 401 Q803.2 396.6 807.0 396.6 Q810.8 396.6 810.8 401 L808.2 413 Q808.2 419.4 811.0 419.4 Q813.8 419.4 813.8 413 L811.2 401 Q811.2 396.6 815.0 396.6 Q818.8 396.6 818.8 401 L816.2 413 Q816.2 419.4 819.0 419.4 Q821.8 419.4 821.8 413 L819.2 401 Q819.2 396.6 823.0 396.6 Q826.8 396.6 826.8 401 L824.2 413 Q824.2 419.4 827.0 419.4 Q829.8 419.4 829.8 413 L827.2 401 Q827.2 396.6 831.0 396.6 Q834.8 396.6 834.8 401 L832.2 413 Q832.2 419.4 835.0 419.4 Q837.8 419.4 837.8 413 L835.2 401 Q835.2 396.6 839.0 396.6 Q842.8 396.6 842.8 401 L840.2 413 Q840.2 419.4 843.0 419.4 Q845.8 419.4 845.8 413 L843.2 401 Q843.2 396.6 847.0 396.6 Q850.8 396.6 850.8 401 L848.2 413 Q848.2 419.4 851.0 419.4 Q853.8 419.4 853.8 413 L851.2 401 Q851.2 396.6 855.0 396.6 Q858.8 396.6 858.8 401 L856.2 413 Q856.2 419.4 859.0 419.4 Q861.8 419.4 861.8 413 L859.2 401 Q859.2 396.6 863.0 396.6 Q866.8 396.6 866.8 401 L864.2 413 Q864.2 419.4 867.0 419.4 Q869.8 419.4 869.8 413 L867.2 401 Q867.2 396.6 871.0 396.6 Q874.8 396.6 874.8 401 L872.2 413 Q872.2 419.4 875.0 419.4 Q877.8 419.4 877.8 413 L875.2 401 Q875.2 396.6 879.0 396.6 Q882.8 396.6 882.8 401 L880.2 413 Q880.2 419.4 883.0 419.4 Q885.8 419.4 885.8 413 L883.2 401 Q883.2 396.6 887.0 396.6 Q890.8 396.6 890.8 401 L888.2 413 Q888.2 419.4 891.0 419.4 Q893.8 419.4 893.8 413 L891.2 401 Q891.2 396.6 895.0 396.6 Q898.8 396.6 898.8 401 L896.2 413 Q896.2 419.4 899.0 419.4 Q901.8 419.4 901.8 413 L899.2 401 Q899.2 396.6 903.0 396.6 Q906.8 396.6 906.8 401 L904.2 413 Q904.2 419.4 907.0 419.4 Q909.8 419.4 909.8 413 L907.2 401 Q907.2 396.6 911.0 396.6 Q914.8 396.6 914.8 401 L912.2 413 Q912.2 419.4 915.0 419.4 Q917.8 419.4 917.8 413 L915.2 401 Q915.2 396.6 919.0 396.6 Q922.8 396.6 922.8 401 L920.2 413 Q920.2 419.4 923.0 419.4 Q925.8 419.4 925.8 413 L923.2 401 Q923.2 396.6 927.0 396.6 Q930.8 396.6 930.8 401 L928.2 413 Q928.2 419.4 931.0 419.4 Q933.8 419.4 933.8 413 L931.2 401 Q931.2 396.6 935.0 396.6 Q938.8 396.6 938.8 401 L936.2 413 Q936.2 419.4 939.0 419.4 Q941.8 419.4 941.8 413 L939.2 401 Q939.2 396.6 943.0 396.6 Q946.8 396.6 946.8 401 L944.2 413 Q944.2 419.4 947.0 419.4 Q949.8 419.4 949.8 413 L947.2 401 Q947.2 396.6 951.0 396.6 Q954.8 396.6 954.8 401 L952.2 413 Q952.2 419.4 955.0 419.4 Q957.8 419.4 957.8 413 L955.2 401 Q955.2 396.6 959.0 396.6 Q962.8 396.6 962.8 401 L960.2 413 Q960.2 419.4 963.0 419.4 Q965.8 419.4 965.8 413 L963.2 401 Q963.2 396.6 967.0 396.6 Q970.8 396.6 970.8 401 L968.2 413 Q968.2 419.4 971.0 419.4 Q973.8 419.4 973.8 413 L971.2 401 Q971.2 396.6 975.0 396.6 Q978.8 396.6 978.8 401 L976.2 413 Q976.2 419.4 979.0 419.4 Q981.8 419.4 981.8 413 L979.2 401 Q979.2 396.6 983.0 396.6 Q986.8 396.6 986.8 401 L984.2 413 Q984.2 419.4 987.0 419.4 Q989.8 419.4 989.8 413 L987.2 401 Q987.2 396.6 991.0 396.6 Q994.8 396.6 994.8 401 L992.2 413 Q992.2 419.4 995.0 419.4 Q997.8 419.4 997.8 413 L995.2 401 Q995.2 396.6 999.0 396.6 Q1002.8 396.6 1002.8 401 L1000.2 413 Q1000.2 419.4 1003.0 419.4 Q1005.8 419.4 1005.8 413 L1003.2 401 Q1003.2 396.6 1007.0 396.6 Q1010.8 396.6 1010.8 401 L1008.2 413 Q1008.2 419.4 1011.0 419.4 Q1013.8 419.4 1013.8 413 L1011.2 401 Q1011.2 396.6 1015.0 396.6 Q1018.8 396.6 1018.8 401 L1016.2 413 Q1016.2 419.4 1019.0 419.4 Q1021.8 419.4 1021.8 413 L1019.2 401 Q1019.2 396.6 1023.0 396.6 Q1026.8 396.6 1026.8 401 L1024.2 413 Q1024.2 419.4 1027.0 419.4 Q1029.8 419.4 1029.8 413 " fill="none" stroke="#000" stroke-width="1.1"/><rect x="776" y="420" width="238" height="80" fill="#808080"/><rect x="776" y="420" width="238" height="80" fill="url(#p3)"/><path d="M775.5 337 V608 M1014.5 337 V608" stroke="#000" stroke-width="1" stroke-dasharray="3 3"/><path d="M743 583.5 H1014" stroke="#000" stroke-width="1.2"/><path d="M776.00 588 L783.00 580 M784.45 588 L791.45 580 M792.90 588 L799.90 580 M801.35 588 L808.35 580 M809.80 588 L816.80 580 M818.25 588 L825.25 580 M826.70 588 L833.70 580 M835.15 588 L842.15 580 M843.60 588 L850.60 580 M852.05 588 L859.05 580 M860.50 588 L867.50 580 M868.95 588 L875.95 580 M877.40 588 L884.40 580 M885.85 588 L892.85 580 M894.30 588 L901.30 580 M902.75 588 L909.75 580 M911.20 588 L918.20 580 M919.65 588 L926.65 580 M928.10 588 L935.10 580 M936.55 588 L943.55 580 M945.00 588 L952.00 580 M953.45 588 L960.45 580 M961.90 588 L968.90 580 M970.35 588 L977.35 580 M978.80 588 L985.80 580 M987.25 588 L994.25 580 M995.70 588 L1002.70 580 M1004.15 588 L1011.15 580 " stroke="#000" stroke-width="1"/><rect x="1015" y="570" width="20" height="25" fill="#fff"/><path d="M1014.5 560 V608" stroke="#000" stroke-width="1" stroke-dasharray="3 3"/><path d="M743 375.5 H776" stroke="#000" stroke-width="1.2"/><polygon points="731.5,367 738.5,367 743,371.5 743,378.5 738.5,383 731.5,383 727,378.5 727,371.5" fill="#fff" stroke="#000" stroke-width="1.2"/><text x="735" y="379.5" font-family="Liberation Sans" font-size="12" text-anchor="middle" fill="#000">1</text><path d="M1014 407.5 H1044" stroke="#000" stroke-width="1.2"/><polygon points="1048.5,399 1055.5,399 1060,403.5 1060,410.5 1055.5,415 1048.5,415 1044,410.5 1044,403.5" fill="#fff" stroke="#000" stroke-width="1.2"/><text x="1052" y="411.5" font-family="Liberation Sans" font-size="12" text-anchor="middle" fill="#000">2</text><path d="M743 460.5 H776" stroke="#000" stroke-width="1.2"/><polygon points="731.5,452 738.5,452 743,456.5 743,463.5 738.5,468 731.5,468 727,463.5 727,456.5" fill="#fff" stroke="#000" stroke-width="1.2"/><text x="735" y="464.5" font-family="Liberation Sans" font-size="12" text-anchor="middle" fill="#000">3</text><path d="M1014 539.5 H1044" stroke="#000" stroke-width="1.2"/><polygon points="1048.5,531 1055.5,531 1060,535.5 1060,542.5 1055.5,547 1048.5,547 1044,542.5 1044,535.5" fill="#fff" stroke="#000" stroke-width="1.2"/><text x="1052" y="543.5" font-family="Liberation Sans" font-size="12" text-anchor="middle" fill="#000">4</text><path d="M743 583.5 H776" stroke="#000" stroke-width="1.2"/><polygon points="731.5,575 738.5,575 743,579.5 743,586.5 738.5,591 731.5,591 727,586.5 727,579.5" fill="#fff" stroke="#000" stroke-width="1.2"/><text x="735" y="587.5" font-family="Liberation Sans" font-size="12" text-anchor="middle" fill="#000">5</text></svg>
<div class="a" style="left:727px;top:634px;width:366px;height:213px;border:1px solid #000;background:#fff"></div>
<div class="a" style="left:728px;top:635px;width:364px;height:21px;background:#dcd9d5;"></div>
<div class="a" style="left:728px;top:656px;width:364px;height:1px;background:#000;"></div>
<div class="t" style="left:732px;top:640px;font-size:11.43px;color:#111;">Camadas</div>
<div class="t" style="left:732px;top:661px;font-size:11.72px;color:#111;">1 - Enchimento e regularização: 10 cm</div>
<div class="t" style="left:732px;top:679px;font-size:11.64px;color:#111;">2 - Poliestireno extrudido (XPS): 6 cm</div>
<div class="t" style="left:732px;top:697px;font-size:11.57px;color:#111;">3 - Laje maciça: 20 cm</div>
<div class="t" style="left:732px;top:715px;font-size:11.35px;color:#111;">4 - Caixa de ar: 20 cm</div>
<div class="t" style="left:732px;top:733px;font-size:11.59px;color:#111;">5 - Placa de gesso cartonado: 2 cm</div>
<div class="t" style="left:732px;top:751px;font-size:11.31px;color:#111;">Espessura total: 58.0 cm</div>
<div class="a" style="left:728px;top:767px;width:364px;height:1px;background:#000;"></div>
<div class="a" style="left:728px;top:768px;width:364px;height:20px;background:#dcd9d5;"></div>
<div class="a" style="left:728px;top:788px;width:364px;height:1px;background:#000;"></div>
<div class="t" style="left:732px;top:773px;font-size:11.63px;color:#111;">Caracterização térmica</div>
<div class="t" style="left:732px;top:794px;font-size:11.83px;color:#111;">Coeficiente de transmissão térmica (arrefecimento): 0.34 W/(m²·°C)</div>
<div class="t" style="left:732px;top:812px;font-size:11.85px;color:#111;">Coeficiente de transmissão térmica (aquecimento): 0.35 W/(m²·°C)</div>
<div class="t" style="left:732px;top:830px;font-size:11.5px;color:#111;">Capacidade térmica: 36873.40 J/m²·°C</div>
<div class="a" style="left:1133px;top:145px;width:787px;height:20px;background:#d9d9d9;"></div>
<div class="t" style="left:1136px;top:148px;color:#111;">Vistas</div>
<svg style="left:1884px;top:152px;" width="12" height="7" viewBox="0 0 12 7"><path d="M1 1 L6 6 L11 1" fill="none" stroke="#111" stroke-width="1.8"/></svg>
<svg style="left:1905px;top:150px;" width="11" height="11" viewBox="0 0 11 11"><path d="M0.5 0.5 L10.5 10.5 M10.5 0.5 L0.5 10.5" stroke="#111" stroke-width="1.4"/></svg>
<svg style="left:1137px;top:170px;" width="22" height="22" viewBox="0 0 22 22"><path d="M0.5 5 V0.5 H4 M0.5 16 V20.5 H4 M13 20.5 H16.5 V16" fill="none" stroke="#6a8ab0" stroke-width="1"/><path d="M4 9 L9.5 6 L15 9 L15 16 L9.5 19 L4 16Z" fill="#e8ecf4" stroke="#3a5f90" stroke-width="1.1"/><path d="M9.5 12 L15 9 L15 16 L9.5 19Z" fill="#8a9cbc"/><path d="M4 9 L9.5 12 V19" fill="none" stroke="#3a5f90" stroke-width="1"/><path d="M17 0 V8 M13 4 H21" stroke="#2a4f80" stroke-width="1.8"/></svg>
<svg style="left:1168px;top:170px;" width="22" height="22" viewBox="0 0 22 22"><path d="M0.5 5 V0.5 H4 M0.5 16 V20.5 H4 M13 20.5 H16.5 V16" fill="none" stroke="#6a8ab0" stroke-width="1"/><path d="M4 9 L9.5 6 L15 9 L15 16 L9.5 19 L4 16Z" fill="#e8ecf4" stroke="#3a5f90" stroke-width="1.1"/><path d="M9.5 12 L15 9 L15 16 L9.5 19Z" fill="#8a9cbc"/><path d="M4 9 L9.5 12 V19" fill="none" stroke="#3a5f90" stroke-width="1"/><path d="M12 11 L19 2 Q20.5 1 21.5 2.5 L14 12Z" fill="#fff" stroke="#2a4f80" stroke-width="1.2"/></svg>
<svg style="left:1199px;top:170px;" width="22" height="22" viewBox="0 0 22 22"><path d="M0.5 5 V0.5 H4 M0.5 16 V20.5 H4 M13 20.5 H16.5 V16" fill="none" stroke="#6a8ab0" stroke-width="1"/><path d="M4 9 L9.5 6 L15 9 L15 16 L9.5 19 L4 16Z" fill="#e8ecf4" stroke="#3a5f90" stroke-width="1.1"/><path d="M9.5 12 L15 9 L15 16 L9.5 19Z" fill="#8a9cbc"/><path d="M4 9 L9.5 12 V19" fill="none" stroke="#3a5f90" stroke-width="1"/><rect x="11.5" y="0.5" width="9" height="11" fill="#fff" stroke="#3a5f90"/><rect x="9.5" y="3.5" width="8" height="10" fill="#fff" stroke="#3a5f90"/></svg>
<svg style="left:1230px;top:170px;" width="22" height="22" viewBox="0 0 22 22"><path d="M0.5 5 V0.5 H4 M0.5 16 V20.5 H4 M13 20.5 H16.5 V16" fill="none" stroke="#6a8ab0" stroke-width="1"/><path d="M4 9 L9.5 6 L15 9 L15 16 L9.5 19 L4 16Z" fill="#e8ecf4" stroke="#3a5f90" stroke-width="1.1"/><path d="M9.5 12 L15 9 L15 16 L9.5 19Z" fill="#8a9cbc"/><path d="M4 9 L9.5 12 V19" fill="none" stroke="#3a5f90" stroke-width="1"/><path d="M14 2 L20 8 M20 2 L14 8" stroke="#e00" stroke-width="1.8"/></svg>
<div class="a" style="left:1257px;top:165px;width:30px;height:29px;background:#d8e8f5;border:1px solid #b8d4ec"></div>
<svg style="left:1262px;top:170px;" width="22" height="22" viewBox="0 0 22 22"><path d="M6 5.5 Q11.5 0 17 5.5 Q11.5 10 6 5.5Z" fill="#fff" stroke="#2a4f80" stroke-width="1"/><circle cx="11.5" cy="5.3" r="2" fill="#2a4f80"/><path d="M5 4 Q11.5 -2 18 4" fill="none" stroke="#2a4f80" stroke-width="0.8"/><path d="M4 20 L11.5 13 L19 20Z" fill="#9aa4b4"/><path d="M1 20.5 H21" stroke="#2a4f80" stroke-width="1.4"/></svg>
<div class="a" style="left:1291px;top:167px;width:1px;height:26px;background:#a0a0a0;"></div>
<svg style="left:1301px;top:172px;" width="21" height="17" viewBox="0 0 21 17"><path d="M0.5 4.5 H6 L8 1 H14 L16 4.5 H20.5 V16.5 H0.5Z" fill="#fff" stroke="#3a5f90" stroke-width="1.1"/><circle cx="10.5" cy="10" r="4.5" fill="none" stroke="#3a5f90" stroke-width="1.1"/><circle cx="10.5" cy="10" r="2.8" fill="none" stroke="#3a5f90" stroke-width="0.8"/></svg>
<svg style="left:1332px;top:170px;" width="21" height="17" viewBox="0 0 21 17"><path d="M0.5 4.5 H6 L8 1 H14 L16 4.5 H20.5 V16.5 H0.5Z" fill="#fff" stroke="#3a5f90" stroke-width="1.1"/><circle cx="10.5" cy="10" r="4.5" fill="none" stroke="#3a5f90" stroke-width="1.1"/><circle cx="10.5" cy="10" r="2.8" fill="none" stroke="#3a5f90" stroke-width="0.8"/><path d="M0 18 Q1 13 6 13" fill="none" stroke="#2a4f80" stroke-width="1.6"/><path d="M5 11 L8 13 L5 15Z" fill="#2a4f80"/></svg>
<div class="a" style="left:1361px;top:167px;width:1px;height:26px;background:#a0a0a0;"></div>
<svg style="left:1370px;top:171px;" width="23" height="21" viewBox="0 0 23 21"><path d="M1 1 L10 4 V20 L1 17Z" fill="#b8c4d8" stroke="#3a5f90" stroke-width="1"/><path d="M3 4 V16 M6 5 V17 M1 8 L10 11 M1 12 L10 15" stroke="#5a7aa8" stroke-width="0.6"/><path d="M10 8 L17 5 L22 8 V16 L15 20 L10 17Z" fill="#fff" stroke="#3a5f90" stroke-width="1"/></svg>
<svg style="left:1401px;top:171px;" width="23" height="21" viewBox="0 0 23 21"><path d="M1 1 L10 4 V20 L1 17Z" fill="#b8c4d8" stroke="#3a5f90" stroke-width="1"/><path d="M3 4 V16 M6 5 V17 M1 8 L10 11 M1 12 L10 15" stroke="#5a7aa8" stroke-width="0.6"/><path d="M10 8 L17 5 L22 8 V16 L15 20 L10 17Z" fill="#fff" stroke="#3a5f90" stroke-width="1"/><path d="M0 21 Q1 15 6 15" fill="none" stroke="#2a4f80" stroke-width="1.6"/><path d="M5 13 L8 15 L5 17Z" fill="#2a4f80"/></svg>
<div class="a" style="left:1133px;top:203px;width:770px;height:108px;background:#fff;"></div>
<div class="a" style="left:1133px;top:243px;width:770px;height:20px;background:#f4f4f4;"></div>
<div class="a" style="left:1133px;top:283px;width:770px;height:20px;background:#cce4f7;"></div>
<div class="t" style="left:1177px;top:206px;color:#111;">Piso 2</div>
<div class="t" style="left:1177px;top:226px;color:#111;">Piso 1</div>
<div class="t" style="left:1177px;top:246px;color:#111;">Piso 0</div>
<svg style="left:1141px;top:268px;" width="11" height="7" viewBox="0 0 11 7"><path d="M1 1 L5.5 5.5 L10 1" fill="none" stroke="#333" stroke-width="1.6"/></svg>
<div class="t" style="left:1158px;top:266px;font-size:11.5px;color:#333;font-weight:bold;">Vistas 3D</div>
<div class="t" style="left:1177px;top:286px;color:#111;">3D</div>
<div class="a" style="left:1911px;top:241px;width:2px;height:53px;background:#8a8a8a;"></div>
<div class="a" style="left:1520px;top:314px;width:1px;height:1px;background:#909090;"></div>
<div class="a" style="left:1523px;top:314px;width:1px;height:1px;background:#909090;"></div>
<div class="a" style="left:1526px;top:314px;width:1px;height:1px;background:#909090;"></div>
<div class="a" style="left:1529px;top:314px;width:1px;height:1px;background:#909090;"></div>
<div class="a" style="left:1133px;top:319px;width:787px;height:20px;background:#d9d9d9;"></div>
<div class="t" style="left:1136px;top:322px;color:#111;">Elementos lidos</div>
<svg style="left:1884px;top:326px;" width="12" height="7" viewBox="0 0 12 7"><path d="M1 1 L6 6 L11 1" fill="none" stroke="#111" stroke-width="1.8"/></svg>
<svg style="left:1905px;top:324px;" width="11" height="11" viewBox="0 0 11 11"><path d="M0.5 0.5 L10.5 10.5 M10.5 0.5 L0.5 10.5" stroke="#111" stroke-width="1.4"/></svg>
<svg style="left:1137px;top:343px;" width="16" height="16" viewBox="0 0 16 16"><rect x="0.5" y="0.5" width="4" height="4" fill="none" stroke="#2f5a90"/><rect x="0.5" y="6" width="4" height="4" fill="none" stroke="#2f5a90"/><rect x="0.5" y="11.5" width="4" height="4" fill="none" stroke="#2f5a90"/><path d="M5 8 H10" stroke="#2f5a90"/><path d="M9 6.5 L11 8 L9 9.5Z" fill="#2f5a90"/><rect x="11.5" y="6" width="4" height="4" fill="none" stroke="#2f5a90"/><path d="M11.5 1 H15.5 M11.5 14.5 H15.5" stroke="#2f5a90" stroke-dasharray="1 1"/></svg>
<svg style="left:1162px;top:343px;" width="16" height="16" viewBox="0 0 16 16"><rect x="0.5" y="0.5" width="6" height="15" rx="1" fill="#dde3ec" stroke="#2f5a90"/><rect x="9.5" y="0.5" width="6" height="15" fill="none" stroke="#2f5a90" stroke-dasharray="1 1"/><path d="M3 8 H13" stroke="#2f5a90"/><path d="M12 6 L14 8 L12 10Z" fill="#2f5a90"/></svg>
<svg style="left:1187px;top:343px;" width="16" height="16" viewBox="0 0 16 16"><rect x="0.5" y="0.5" width="6" height="15" fill="none" stroke="#2f5a90" stroke-dasharray="1 1"/><rect x="9.5" y="0.5" width="6" height="15" rx="1" fill="#dde3ec" stroke="#2f5a90"/><path d="M3 8 H13" stroke="#2f5a90"/><path d="M12 6 L14 8 L12 10Z" fill="#2f5a90"/></svg>
<svg style="left:1213px;top:343px;" width="15" height="15" viewBox="0 0 15 15"><path d="M1 4 L7 1 L13 4 V10 L7 13 L1 10Z" fill="#fff" stroke="#8a9cbc"/><path d="M5 11 Q9 7 14 11 Q9 14 5 11Z" fill="#fff" stroke="#2f5a90"/><circle cx="9.5" cy="11" r="1.6" fill="#2f5a90"/></svg>
<svg style="left:1241px;top:343px;" width="7" height="16" viewBox="0 0 7 16"><circle cx="3.5" cy="2.5" r="2" fill="none" stroke="#2f5a90" stroke-width="1.2"/><rect x="1.5" y="6" width="4" height="9.5" rx="2" fill="none" stroke="#2f5a90" stroke-width="1.4"/></svg>
<div class="a" style="left:1133px;top:363px;width:787px;height:124px;background:#fff;"></div>
<div class="a" style="left:1133px;top:363px;width:787px;height:20px;background:#f4f4f4;"></div>
<svg style="left:1160px;top:366px;" width="13" height="16" viewBox="0 0 13 16"><path d="M3 1 L7 0 L12 2 V9 L8 11 L3 9Z" fill="#fff" stroke="#2f5a90" stroke-width="1"/><path d="M3 1 L8 3 L12 2" fill="#999" stroke="#2f5a90" stroke-width="0.8"/><path d="M1 8 L5 6 L9 8 V14 L5 16 L1 14Z" fill="#fff" stroke="#2f5a90" stroke-width="1"/><path d="M1 8 L5 10 L9 8 L5 6Z" fill="#999"/></svg>
<div class="t" style="left:1177px;top:366px;font-size:11.5px;color:#222;font-weight:bold;">Modelos</div>
<svg style="left:1158px;top:386px;" width="16" height="14" viewBox="0 0 16 14"><circle cx="8" cy="2" r="1.8" fill="#2f5a90"/><path d="M8 3 V7 M3 7 H13 M3 7 V10 M8 7 V10 M13 7 V10" stroke="#2f5a90" stroke-width="1"/><circle cx="2.5" cy="11.5" r="2" fill="#fff" stroke="#2f5a90"/><circle cx="8" cy="11.5" r="2" fill="#fff" stroke="#2f5a90"/><circle cx="13.5" cy="11.5" r="2" fill="#fff" stroke="#2f5a90"/></svg>
<div class="t" style="left:1177px;top:386px;font-size:11.5px;color:#222;font-weight:bold;">Categorias</div>
<svg style="left:1843px;top:368px;" width="16" height="11" viewBox="0 0 16 11"><path d="M1 5.5 Q8 -2 15 5.5 Q8 12 1 5.5Z" fill="#fff" stroke="#6a8ab0"/><circle cx="8" cy="5.5" r="2.5" fill="none" stroke="#6a8ab0" stroke-width="1.2"/></svg>
<svg style="left:1870px;top:366px;" width="15" height="15" viewBox="0 0 15 15"><path d="M7.5 0.5 L14 4 V11 L7.5 14.5 L1 11 V4Z" fill="#3a6aa8" stroke="#2a4f80"/><path d="M1 4 L7.5 7.5 L14 4 M7.5 7.5 V14.5 M4 2.5 L10.5 6 M11 2.5 L4.5 6 M4.2 5.8 V12.8 M10.8 5.8 V12.8" stroke="#cfe0f0" stroke-width="0.6" fill="none"/></svg>
<svg style="left:1898px;top:366px;" width="14" height="16" viewBox="0 0 14 16"><path d="M3 7 V4 A4 4 0 0 1 11 4" fill="none" stroke="#888" stroke-width="1.6"/><rect x="1" y="7" width="12" height="8.5" rx="1" fill="#8a8a8a"/><rect x="6" y="10" width="2" height="3" fill="#fff"/></svg>
<svg style="left:1843px;top:388px;" width="16" height="11" viewBox="0 0 16 11"><path d="M1 5.5 Q8 -2 15 5.5 Q8 12 1 5.5Z" fill="#fff" stroke="#6a8ab0"/><circle cx="8" cy="5.5" r="2.5" fill="none" stroke="#6a8ab0" stroke-width="1.2"/></svg>
<svg style="left:1870px;top:386px;" width="15" height="15" viewBox="0 0 15 15"><path d="M7.5 0.5 L14 4 V11 L7.5 14.5 L1 11 V4Z" fill="#3a6aa8" stroke="#2a4f80"/><path d="M1 4 L7.5 7.5 L14 4 M7.5 7.5 V14.5 M4 2.5 L10.5 6 M11 2.5 L4.5 6 M4.2 5.8 V12.8 M10.8 5.8 V12.8" stroke="#cfe0f0" stroke-width="0.6" fill="none"/></svg>
<svg style="left:1898px;top:386px;" width="14" height="16" viewBox="0 0 14 16"><path d="M3 7 V4 A4 4 0 0 1 11 4" fill="none" stroke="#888" stroke-width="1.6"/><rect x="1" y="7" width="12" height="8.5" rx="1" fill="#8a8a8a"/><rect x="6" y="10" width="2" height="3" fill="#fff"/></svg>
<div class="a" style="left:1520px;top:488px;width:1px;height:1px;background:#909090;"></div>
<div class="a" style="left:1523px;top:488px;width:1px;height:1px;background:#909090;"></div>
<div class="a" style="left:1526px;top:488px;width:1px;height:1px;background:#909090;"></div>
<div class="a" style="left:1529px;top:488px;width:1px;height:1px;background:#909090;"></div>
<div class="a" style="left:1133px;top:493px;width:787px;height:20px;background:#d9d9d9;"></div>
<div class="t" style="left:1136px;top:496px;color:#111;">Vista</div>
<svg style="left:1884px;top:500px;" width="12" height="7" viewBox="0 0 12 7"><path d="M1 1 L6 6 L11 1" fill="none" stroke="#111" stroke-width="1.8"/></svg>
<svg style="left:1905px;top:498px;" width="11" height="11" viewBox="0 0 11 11"><path d="M0.5 0.5 L10.5 10.5 M10.5 0.5 L0.5 10.5" stroke="#111" stroke-width="1.4"/></svg>
<svg style="left:1673px;top:522px;" width="15" height="15" viewBox="0 0 15 15"><path d="M7.5 0 V9 L1 14 M7.5 9 L14 13" fill="none" stroke="#5a8ab0" stroke-width="1.4"/></svg>
<svg style="left:1697px;top:522px;" width="15" height="15" viewBox="0 0 15 15"><path d="M1 4 L4 1 H14 V11 L11 14 H1Z" fill="#a8d4ec" stroke="#111" stroke-width="1.1"/><path d="M1 4 H11 V14 M11 4 L14 1" fill="none" stroke="#111" stroke-width="1.1"/></svg>
<svg style="left:1720px;top:522px;" width="17" height="15" viewBox="0 0 17 15"><circle cx="8" cy="5" r="4" fill="#111"/><path d="M3 7 Q0 10 4 12 Q10 14 15 10" fill="none" stroke="#111" stroke-width="1.1"/><path d="M12 10 L16 10 L13 13" fill="none" stroke="#111"/></svg>
<svg style="left:1744px;top:521px;" width="17" height="16" viewBox="0 0 17 16"><circle cx="8.5" cy="2.5" r="2" fill="none" stroke="#111"/><path d="M8.5 4.5 V15" stroke="#111" stroke-width="1.4"/><path d="M5 8 Q0 10 3 13 Q8 15 14 13 Q16 11 13 9" fill="none" stroke="#111" stroke-width="1.1"/><path d="M11 12 L14 14 L11 15Z" fill="#111"/></svg>
<div class="a" style="left:1766px;top:517px;width:1px;height:23px;background:#b0b0b0;"></div>
<svg style="left:1776px;top:523px;" width="13" height="14" viewBox="0 0 13 14"><rect x="0.5" y="0.5" width="6" height="12" fill="#a8d4ec" stroke="#111"/><rect x="6.5" y="0.5" width="6" height="12" fill="#f8c0c0" stroke="#e00"/><path d="M6.5 0 V13" stroke="#111" stroke-dasharray="1 1"/></svg>
<svg style="left:1800px;top:522px;" width="14" height="15" viewBox="0 0 14 15"><rect x="0.5" y="1.5" width="12" height="12" fill="#a8d4ec" stroke="#111"/><path d="M0.5 13.5 L12.5 1.5 V0 M0.5 13.5 V1.5 H12.5" fill="#40e040"/><path d="M0 14 L13.5 0.5" stroke="#111"/></svg>
<svg style="left:1824px;top:522px;" width="14" height="14" viewBox="0 0 14 14"><rect x="0.5" y="0.5" width="12" height="12" fill="#a8d4ec" stroke="#2020a0"/><rect x="1" y="1" width="11" height="5" fill="#d8d8ff"/><path d="M0 6.5 H13" stroke="#111" stroke-dasharray="1.5 1"/></svg>
<svg style="left:1847px;top:521px;" width="15" height="16" viewBox="0 0 15 16"><path d="M7.5 1 L14 4 V12 L7.5 15 L1 12 V4Z" fill="#8ab8d8" stroke="#555"/><path d="M1 4 L7.5 7 L14 4 L7.5 1Z" fill="#f0a0a0"/><path d="M1 7 L7.5 10 L14 7 V9 L7.5 12 L1 9Z" fill="#b0a0e0"/><path d="M7.5 10 L14 7 V9 L7.5 12Z" fill="#60c040"/></svg>
<svg style="left:1870px;top:522px;" width="17" height="15" viewBox="0 0 17 15"><path d="M1 8 Q8.5 0 16 8 Q8.5 14 1 8Z" fill="#111"/><circle cx="8.5" cy="7.5" r="2.5" fill="#fff"/><path d="M3 14 L14 1" stroke="#111" stroke-width="1.2"/></svg>
<div class="a" style="left:1892px;top:517px;width:1px;height:23px;background:#b0b0b0;"></div>
<svg style="left:1901px;top:521px;" width="16" height="17" viewBox="0 0 16 17"><text x="6" y="8" font-family="Liberation Sans" font-size="8.5" font-weight="bold" fill="#444" text-anchor="middle">3D</text><circle cx="10" cy="12" r="3.5" fill="none" stroke="#888" stroke-width="1.2" stroke-dasharray="1.5 1"/></svg>
<div class="a" style="left:1133px;top:543px;width:787px;height:452px;background:#fff;"></div>
<div class="a" style="left:1128px;top:566px;width:1px;height:1px;background:#a0a0a0;"></div>
<div class="a" style="left:1130px;top:566px;width:1px;height:1px;background:#a0a0a0;"></div>
<div class="a" style="left:1128px;top:569px;width:1px;height:1px;background:#a0a0a0;"></div>
<div class="a" style="left:1130px;top:569px;width:1px;height:1px;background:#a0a0a0;"></div>
<div class="a" style="left:1128px;top:572px;width:1px;height:1px;background:#a0a0a0;"></div>
<div class="a" style="left:1130px;top:572px;width:1px;height:1px;background:#a0a0a0;"></div>
<div class="a" style="left:1128px;top:575px;width:1px;height:1px;background:#a0a0a0;"></div>
<div class="a" style="left:1130px;top:575px;width:1px;height:1px;background:#a0a0a0;"></div>
<svg style="left:0;top:0" width="1920" height="1032" viewBox="0 0 1920 1032"><polygon points="1294.6,609.5 1301.6,606.0 1325.0,616.5 1325.0,709.0 1294.6,695.0" fill="#e0e0e0" stroke="#a0a0a0" stroke-width="1" stroke-linejoin="round" /><polygon points="1302.0,618.0 1324.0,628.0 1324.0,706.0 1302.0,696.0" fill="#cbcbcb" stroke="none" stroke-width="0" stroke-linejoin="round" /><polygon points="1302.0,624.0 1324.0,634.0 1324.0,642.0 1302.0,632.0" fill="#b8b8b8" stroke="none" stroke-width="0" stroke-linejoin="round" /><polygon points="1302.0,690.0 1324.0,680.0 1324.0,700.0 1302.0,700.0" fill="#b8b8b8" stroke="none" stroke-width="0" stroke-linejoin="round" /><polygon points="1301.6,606.0 1446.3,554.6 1469.0,565.0 1325.0,616.5" fill="#e2e2e2" stroke="#a0a0a0" stroke-width="1" stroke-linejoin="round" /><polygon points="1325.0,616.5 1469.0,565.0 1469.0,581.0 1325.0,632.0" fill="#dcdcdc" stroke="#a0a0a0" stroke-width="1" stroke-linejoin="round" /><path d="M1330.0 624.0 L1462.0 577.0" stroke="#c4c4c4" stroke-width="2" /><polygon points="1452.5,552.0 1481.0,565.0 1481.0,585.0 1469.0,581.0 1469.0,565.0 1446.3,554.6" fill="#e0e0e0" stroke="#a0a0a0" stroke-width="1" stroke-linejoin="round" /><polygon points="1452.0,558.0 1469.0,565.0 1469.0,581.0 1452.0,575.0" fill="#c8c8c8" stroke="none" stroke-width="0" stroke-linejoin="round" /><polygon points="1302.0,702.0 1323.0,712.5 1336.0,709.0 1325.0,705.0" fill="#e0e0e0" stroke="#a0a0a0" stroke-width="1" stroke-linejoin="round" /><polygon points="1331.0,803.5 1577.5,917.5 1722.5,865.2 1476.0,751.2" fill="#a3a3a3" stroke="#3c3c3c" stroke-width="1.5" stroke-linejoin="round" /><polygon points="1331.0,872.0 1577.5,986.0 1577.5,917.5 1331.0,803.5" fill="#c2c2c2" stroke="#3c3c3c" stroke-width="1.5" stroke-linejoin="round" /><polygon points="1577.5,986.0 1722.5,933.7 1722.5,865.2 1577.5,917.5" fill="#c9c9c9" stroke="#3c3c3c" stroke-width="1.5" stroke-linejoin="round" /><path d="M1420.2 913.3 L1420.2 844.8" stroke="#474747" stroke-width="3" /><path d="M1468.3 935.5 L1468.3 867.0" stroke="#474747" stroke-width="3" /><polygon points="1630.7,911.2 1720.2,879.8 1720.2,934.4 1630.7,965.8" fill="#a6d2d2" stroke="#3c3c3c" stroke-width="1.6" stroke-linejoin="round" /><polygon points="1331.0,719.0 1552.1,821.3 1594.2,806.1 1619.5,817.8 1722.5,780.7 1476.0,666.7" fill="#a3a3a3" stroke="#3c3c3c" stroke-width="1.5" stroke-linejoin="round" /><polygon points="1552.1,891.0 1594.2,875.8 1594.2,806.1 1552.1,821.3" fill="#b8b8b8" stroke="#3c3c3c" stroke-width="1" stroke-linejoin="round" /><polygon points="1594.2,875.8 1619.5,887.5 1619.5,817.8 1594.2,806.1" fill="#bdbdbd" stroke="#3c3c3c" stroke-width="1" stroke-linejoin="round" /><polygon points="1557.5,887.1 1583.6,877.6 1583.6,819.9 1557.5,829.4" fill="#8fb3b3" stroke="#3c3c3c" stroke-width="1.4" stroke-linejoin="round" /><polygon points="1331.0,788.7 1552.1,891.0 1552.1,821.3 1331.0,719.0" fill="#c2c2c2" stroke="#3c3c3c" stroke-width="1.5" stroke-linejoin="round" /><polygon points="1619.5,887.5 1722.5,850.4 1722.5,780.7 1619.5,817.8" fill="#c9c9c9" stroke="#3c3c3c" stroke-width="1.5" stroke-linejoin="round" /><path d="M1468.3 852.2 L1468.3 782.5" stroke="#474747" stroke-width="3" /><polygon points="1648.0,815.8 1720.0,790.0 1720.0,826.3 1648.0,849.5" fill="#a6d2d2" stroke="#3c3c3c" stroke-width="1.6" stroke-linejoin="round" /><polygon points="1552.1,891.0 1577.5,902.7 1619.5,887.5 1594.2,875.8" fill="#9a9a9a" stroke="#3c3c3c" stroke-width="1" stroke-linejoin="round" /><polygon points="1331.0,635.3 1577.5,749.3 1722.5,697.0 1476.0,583.0" fill="#a3a3a3" stroke="#3c3c3c" stroke-width="1.5" stroke-linejoin="round" /><polygon points="1331.0,706.7 1577.5,820.7 1577.5,749.3 1331.0,635.3" fill="#c2c2c2" stroke="#3c3c3c" stroke-width="1.5" stroke-linejoin="round" /><polygon points="1577.5,820.7 1722.5,768.4 1722.5,697.0 1577.5,749.3" fill="#c9c9c9" stroke="#3c3c3c" stroke-width="1.5" stroke-linejoin="round" /><path d="M1425.4 750.4 L1425.4 679.0" stroke="#474747" stroke-width="3.2" /><path d="M1425.4 681.0 L1425.4 691.0" stroke="#e0e0e0" stroke-width="1" /><path d="M1468.1 770.1 L1468.1 698.7" stroke="#474747" stroke-width="3.2" /><path d="M1468.1 700.7 L1468.1 710.7" stroke="#e0e0e0" stroke-width="1" /><polygon points="1580.0,754.0 1642.0,733.0 1642.0,796.0 1580.0,816.0" fill="#a6d2d2" stroke="#3c3c3c" stroke-width="1.6" stroke-linejoin="round" /><path d="M1645.0 725.0 L1645.0 797.0" stroke="#474747" stroke-width="3" /><polygon points="1648.0,731.0 1720.5,706.0 1720.5,768.0 1648.0,793.0" fill="#a6d2d2" stroke="#3c3c3c" stroke-width="1.6" stroke-linejoin="round" /><polygon points="1580.0,754.0 1598.0,748.0 1598.0,810.0 1580.0,816.0" fill="rgba(120,150,150,0.35)" stroke="none" stroke-width="0" stroke-linejoin="round" /><path d="M1405.3 608.3 L1459.8 635.2" stroke="#474747" stroke-width="3.2" /><path d="M1405.3 608.3 L1459.8 635.2" stroke="#9a9a9a" stroke-width="0.9" stroke-dasharray="1 1.5"/><path d="M1459.8 635.2 L1494.7 623.6" stroke="#474747" stroke-width="3.2" /><path d="M1459.8 635.2 L1494.7 623.6" stroke="#9a9a9a" stroke-width="0.9" stroke-dasharray="1 1.5"/><path d="M1494.7 623.6 L1531.0 639.6" stroke="#474747" stroke-width="3.2" /><path d="M1494.7 623.6 L1531.0 639.6" stroke="#9a9a9a" stroke-width="0.9" stroke-dasharray="1 1.5"/><path d="M1531.0 639.6 L1567.3 626.5" stroke="#474747" stroke-width="3.2" /><path d="M1531.0 639.6 L1567.3 626.5" stroke="#9a9a9a" stroke-width="0.9" stroke-dasharray="1 1.5"/><path d="M1426.3 647.6 L1459.8 635.2" stroke="#474747" stroke-width="3.2" /><path d="M1426.3 647.6 L1459.8 635.2" stroke="#9a9a9a" stroke-width="0.9" stroke-dasharray="1 1.5"/><path d="M1426.3 647.6 L1462.7 664.3" stroke="#474747" stroke-width="3.2" /><path d="M1426.3 647.6 L1462.7 664.3" stroke="#9a9a9a" stroke-width="0.9" stroke-dasharray="1 1.5"/><path d="M1462.7 664.3 L1531.0 639.6" stroke="#474747" stroke-width="3.2" /><path d="M1462.7 664.3 L1531.0 639.6" stroke="#9a9a9a" stroke-width="0.9" stroke-dasharray="1 1.5"/><path d="M1424.9 677.4 L1462.7 664.3" stroke="#474747" stroke-width="3.2" /><path d="M1424.9 677.4 L1462.7 664.3" stroke="#9a9a9a" stroke-width="0.9" stroke-dasharray="1 1.5"/><path d="M1467.0 697.7 L1573.1 661.4" stroke="#474747" stroke-width="3.2" /><path d="M1467.0 697.7 L1573.1 661.4" stroke="#9a9a9a" stroke-width="0.9" stroke-dasharray="1 1.5"/><path d="M1573.1 661.4 L1608.0 646.9" stroke="#474747" stroke-width="3.2" /><path d="M1573.1 661.4 L1608.0 646.9" stroke="#9a9a9a" stroke-width="0.9" stroke-dasharray="1 1.5"/><path d="M1506.3 684.7 L1552.8 706.5" stroke="#474747" stroke-width="3.2" /><path d="M1506.3 684.7 L1552.8 706.5" stroke="#9a9a9a" stroke-width="0.9" stroke-dasharray="1 1.5"/><path d="M1552.8 706.5 L1616.7 681.7" stroke="#474747" stroke-width="3.2" /><path d="M1552.8 706.5 L1616.7 681.7" stroke="#9a9a9a" stroke-width="0.9" stroke-dasharray="1 1.5"/><path d="M1574.6 661.4 L1618.2 681.7" stroke="#474747" stroke-width="3.2" /><path d="M1574.6 661.4 L1618.2 681.7" stroke="#9a9a9a" stroke-width="0.9" stroke-dasharray="1 1.5"/><path d="M1583.3 696.3 L1640.0 719.5" stroke="#474747" stroke-width="3.2" /><path d="M1583.3 696.3 L1640.0 719.5" stroke="#9a9a9a" stroke-width="0.9" stroke-dasharray="1 1.5"/><polygon points="1564.4,644.7 1586.2,637.4 1605.1,646.1 1581.9,654.1" fill="#7aa8a8" stroke="#474747" stroke-width="1.5" stroke-linejoin="round" /><path d="M1494.7 623.6 L1509.2 619.2" stroke="#555" stroke-width="3" /><path d="M1494.7 623.6 L1509.2 619.2" stroke="#d0d0d0" stroke-width="1.4" /><path d="M1426.3 647.6 L1410.3 652.7" stroke="#555" stroke-width="3" /><path d="M1426.3 647.6 L1410.3 652.7" stroke="#d0d0d0" stroke-width="1.4" /><path d="M1552.8 706.5 L1535.3 711.5" stroke="#555" stroke-width="3" /><path d="M1552.8 706.5 L1535.3 711.5" stroke="#d0d0d0" stroke-width="1.4" /><path d="M1616.7 681.7 L1635.6 677.4" stroke="#555" stroke-width="3" /><path d="M1616.7 681.7 L1635.6 677.4" stroke="#d0d0d0" stroke-width="1.4" /><polygon points="1331.0,635.3 1577.5,749.3 1722.5,697.0 1476.0,583.0" fill="none" stroke="#3a3a3a" stroke-width="2" stroke-linejoin="round" /><polygon points="1729.3,682.2 1757.2,693.0 1757.2,779.8 1729.3,769.0" fill="rgba(215,215,215,0.75)" stroke="#a0a0a0" stroke-width="1" stroke-linejoin="round" /><polygon points="1729.3,686.0 1751.0,694.0 1751.0,778.0 1729.3,769.0" fill="rgba(195,195,195,0.6)" stroke="none" stroke-width="0" stroke-linejoin="round" /><polygon points="1720.0,686.8 1729.3,682.2 1751.0,690.0 1751.0,696.0 1720.0,707.0" fill="rgba(200,200,200,0.6)" stroke="#9a9a9a" stroke-width="1" stroke-linejoin="round" /><polygon points="1720.0,703.0 1751.0,706.0 1751.0,712.0 1720.0,722.0" fill="rgba(190,190,190,0.5)" stroke="#9a9a9a" stroke-width="1" stroke-linejoin="round" /><polygon points="1720.0,780.0 1751.0,778.0 1751.0,792.0 1720.0,801.6" fill="rgba(205,205,205,0.6)" stroke="#9a9a9a" stroke-width="1" stroke-linejoin="round" /><polygon points="1583.0,748.0 1722.0,700.0 1722.0,708.0 1583.0,756.0" fill="rgba(160,160,160,0.35)" stroke="#8a8a8a" stroke-width="0.8" stroke-linejoin="round" /><path d="M1726 684.1 L1856.5 637.0" stroke="#555" stroke-width="1" stroke-dasharray="6 8" stroke-dashoffset="2" opacity="0.9"/><path d="M1860 627.0 L1869 626.0 L1865 636.0Z" fill="#1050a8"/><path d="M1726 770.7 L1856.5 723.6" stroke="#555" stroke-width="1" stroke-dasharray="6 8" stroke-dashoffset="2" opacity="0.9"/><path d="M1860 713.6 L1869 712.6 L1865 722.6Z" fill="#1050a8"/><path d="M1726 853.8 L1856.5 806.7" stroke="#555" stroke-width="1" stroke-dasharray="6 8" stroke-dashoffset="2" opacity="0.9"/><path d="M1860 796.7 L1869 795.7 L1865 805.7Z" fill="#1050a8"/><path d="M1600 982.4 L1856.5 889.9" stroke="#555" stroke-width="1" stroke-dasharray="6 8" stroke-dashoffset="2" opacity="0.9"/><path d="M1860 879.9 L1869 878.9 L1865 888.9Z" fill="#1050a8"/><path d="M1534 754.0 L1548 749.0" stroke="#555" stroke-width="1"/><path d="M1534 839.0 L1548 834.0" stroke="#555" stroke-width="1"/><path d="M1534 922.2 L1548 917.2" stroke="#555" stroke-width="1"/></svg>
<div class="t" style="left:1746px;top:655.0px;font-size:13.6px;font-style:italic;color:#a0a0a0;transform-origin:0 11px;transform:skewY(-19.8deg) scaleX(0.95)">Cobertura [9.25 m]</div>
<div class="t" style="left:1769.5px;top:733.12355px;font-size:13.6px;font-style:italic;color:#a0a0a0;transform-origin:0 11px;transform:skewY(-19.8deg) scaleX(0.95)">Piso 2 [6.10 m]</div>
<div class="t" style="left:1769.5px;top:816.22355px;font-size:13.6px;font-style:italic;color:#a0a0a0;transform-origin:0 11px;transform:skewY(-19.8deg) scaleX(0.95)">Piso 1 [3.05 m]</div>
<div class="t" style="left:1769.5px;top:899.42355px;font-size:13.6px;font-style:italic;color:#a0a0a0;transform-origin:0 11px;transform:skewY(-19.8deg) scaleX(0.95)">Piso 0 [0.00 m]</div>
<svg style="left:0;top:0" width="1920" height="1032" viewBox="0 0 1920 1032"><path d="M1577 986 V944" stroke="#0000e0" stroke-width="2.5"/><path d="M1571 948 L1577 932 L1583 948Z" fill="#0000e0"/><path d="M1577 986 L1612 974" stroke="#e00000" stroke-width="2.5"/><path d="M1606 968 L1624 971 L1611 982Z" fill="#e00000"/><path d="M1577 986 L1548 974" stroke="#00c000" stroke-width="2.5"/><path d="M1553 968 L1538 969 L1549 981Z" fill="#00e000"/><path d="M1560 984 L1590 992 L1600 990" stroke="#9ab0d0" stroke-width="1.5" fill="none"/><path d="M1190 955 V922" stroke="#0000e0" stroke-width="2"/><path d="M1186 926 L1190 914 L1194 926Z" fill="#0000e0"/><path d="M1190 955 L1215 946" stroke="#c00000" stroke-width="2"/><circle cx="1216" cy="945.5" r="2.5" fill="#c00000"/><path d="M1212 942 L1223 943 L1215 950Z" fill="#c00000"/><path d="M1190 955 L1166 944" stroke="#00a000" stroke-width="2"/><circle cx="1166" cy="943" r="2.5" fill="#00c000"/><path d="M1170 940 L1159 941 L1166 948Z" fill="#00c000"/><text x="1190" y="912" font-family="Liberation Sans" font-size="13" font-weight="bold" fill="#0000e0" text-anchor="middle">Z</text><text x="1231" y="945" font-family="Liberation Sans" font-size="13" font-weight="bold" fill="#e02020" text-anchor="middle">X</text><text x="1156" y="945" font-family="Liberation Sans" font-size="13" font-weight="bold" fill="#20c020" text-anchor="middle">Y</text></svg>
<div class="t" style="left:16px;top:999px;font-size:13.2px;color:#333;">Modelo 3D</div>
<div class="a" style="left:99px;top:995px;width:120px;height:19px;background:#cce4f7;"></div>
<div class="t" style="left:111px;top:999px;font-size:13.2px;color:#222;font-weight:bold;">SCE habitação</div>
<svg style="left:8px;top:1015px;" width="17" height="17" viewBox="0 0 17 17"><circle cx="8.5" cy="8.5" r="8" fill="#1a7ac8"/><circle cx="8.5" cy="8.5" r="7" fill="#1c82d0"/><rect x="7.2" y="7" width="2.8" height="7" fill="#fff"/><rect x="6" y="13" width="5.5" height="1.5" fill="#fff"/><circle cx="8.6" cy="4.2" r="1.6" fill="#fff"/></svg>
<div class="t" style="left:32px;top:1016px;color:#111;">Seleccione um elemento.</div>
</body></html>
